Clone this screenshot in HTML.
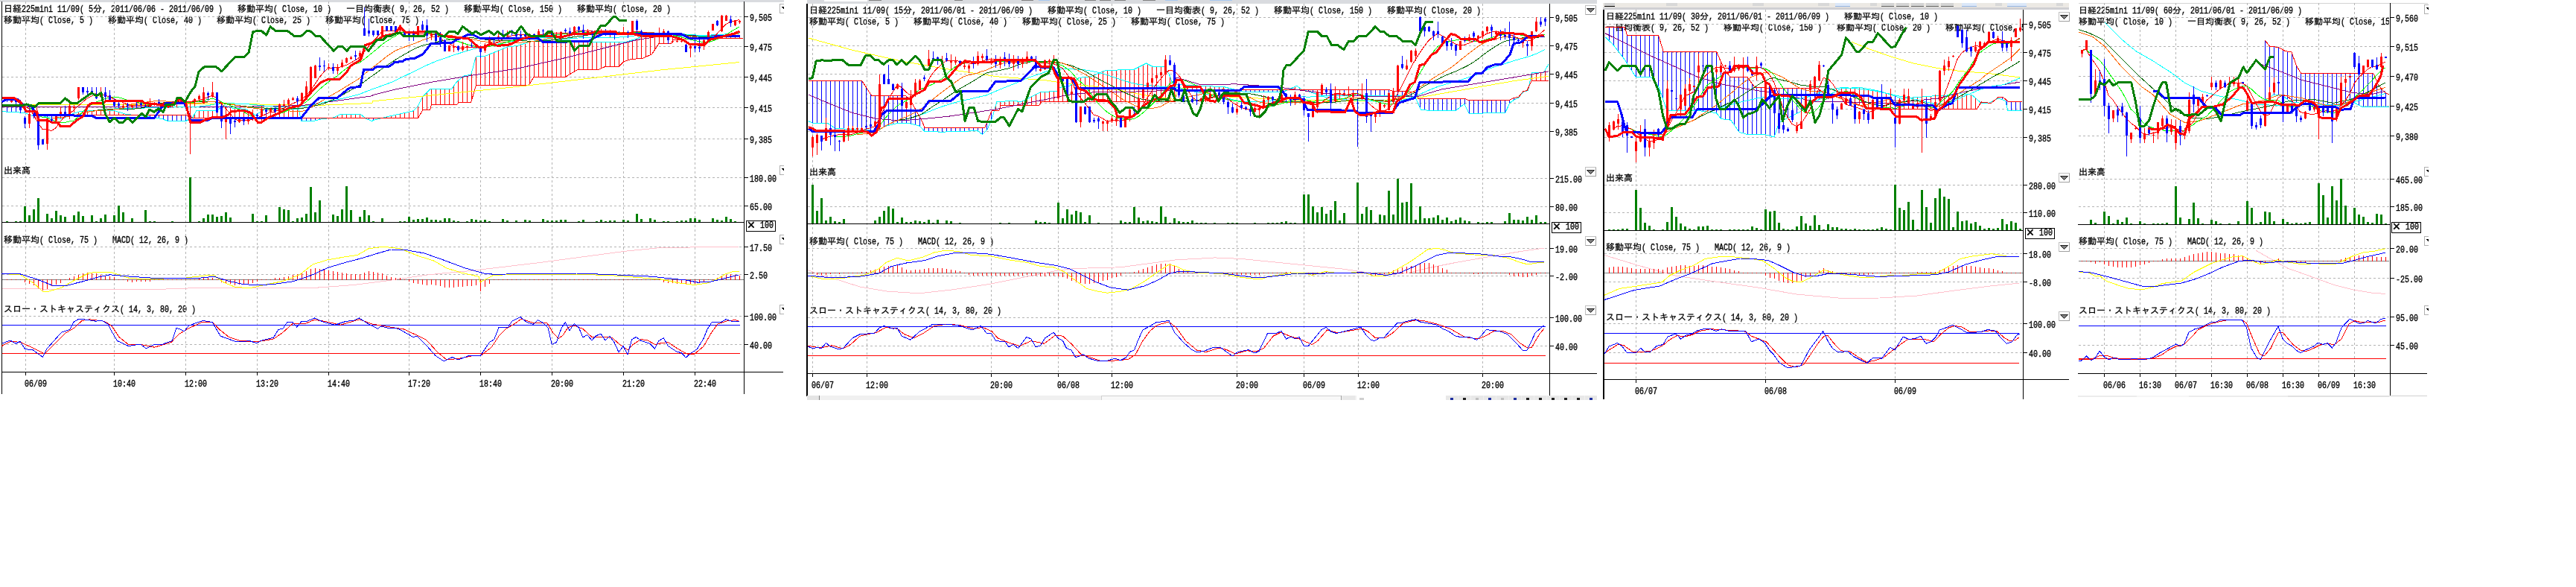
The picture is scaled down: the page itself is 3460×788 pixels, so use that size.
<!DOCTYPE html>
<html lang="ja"><head><meta charset="utf-8"><title>日経225mini charts</title><style>
html,body{margin:0;padding:0;background:#fff}
#root{position:relative;width:3460px;height:788px;overflow:hidden;background:#fff}
svg{position:absolute;left:0;top:0}
#txt{position:absolute;left:0;top:0;width:3460px;height:788px;will-change:transform}
.t{position:absolute;font:12px/12px 'Liberation Mono','IPAGothic',monospace;white-space:pre;color:#000;-webkit-text-stroke:0.3px #000}
.x{display:inline-block;width:12px;text-align:center;transform:scale(1.5)}
.a{font-size:10px;display:inline-block;transform:scaleY(1.3);transform-origin:0 78%}
</style></head><body><div id="root">
<div id="txt">
<div class="t" style="left:1007px;top:19px"><span class="a">9,505</span></div>
<div class="t" style="left:1007px;top:59px"><span class="a">9,475</span></div>
<div class="t" style="left:1007px;top:100px"><span class="a">9,445</span></div>
<div class="t" style="left:1007px;top:141px"><span class="a">9,415</span></div>
<div class="t" style="left:1007px;top:183px"><span class="a">9,385</span></div>
<div class="t" style="left:1007px;top:235px"><span class="a">180.00</span></div>
<div class="t" style="left:1007px;top:273px"><span class="a">65.00</span></div>
<div class="t" style="left:1007px;top:328px"><span class="a">17.50</span></div>
<div class="t" style="left:1007px;top:365px"><span class="a">2.50</span></div>
<div class="t" style="left:1007px;top:421px"><span class="a">100.00</span></div>
<div class="t" style="left:1007px;top:459px"><span class="a">40.00</span></div>
<div class="t" style="left:33px;top:510px"><span class="a">06/09</span></div>
<div class="t" style="left:152px;top:510px"><span class="a">10:40</span></div>
<div class="t" style="left:248px;top:510px"><span class="a">12:00</span></div>
<div class="t" style="left:344px;top:510px"><span class="a">13:20</span></div>
<div class="t" style="left:440px;top:510px"><span class="a">14:40</span></div>
<div class="t" style="left:548px;top:510px"><span class="a">17:20</span></div>
<div class="t" style="left:644px;top:510px"><span class="a">18:40</span></div>
<div class="t" style="left:740px;top:510px"><span class="a">20:00</span></div>
<div class="t" style="left:836px;top:510px"><span class="a">21:20</span></div>
<div class="t" style="left:932px;top:510px"><span class="a">22:40</span></div>
<div class="t" style="left:1003px;top:297px"><span class="x">×</span><span class="a"> 100</span></div>
<div class="t" style="left:2089px;top:20px"><span class="a">9,505</span></div>
<div class="t" style="left:2089px;top:58px"><span class="a">9,475</span></div>
<div class="t" style="left:2089px;top:96px"><span class="a">9,445</span></div>
<div class="t" style="left:2089px;top:135px"><span class="a">9,415</span></div>
<div class="t" style="left:2089px;top:173px"><span class="a">9,385</span></div>
<div class="t" style="left:2089px;top:236px"><span class="a">215.00</span></div>
<div class="t" style="left:2089px;top:274px"><span class="a">80.00</span></div>
<div class="t" style="left:2089px;top:330px"><span class="a">19.00</span></div>
<div class="t" style="left:2089px;top:367px"><span class="a">-2.00</span></div>
<div class="t" style="left:2089px;top:423px"><span class="a">100.00</span></div>
<div class="t" style="left:2089px;top:461px"><span class="a">40.00</span></div>
<div class="t" style="left:1090px;top:512px"><span class="a">06/07</span></div>
<div class="t" style="left:1163px;top:512px"><span class="a">12:00</span></div>
<div class="t" style="left:1330px;top:512px"><span class="a">20:00</span></div>
<div class="t" style="left:1420px;top:512px"><span class="a">06/08</span></div>
<div class="t" style="left:1492px;top:512px"><span class="a">12:00</span></div>
<div class="t" style="left:1660px;top:512px"><span class="a">20:00</span></div>
<div class="t" style="left:1750px;top:512px"><span class="a">06/09</span></div>
<div class="t" style="left:1823px;top:512px"><span class="a">12:00</span></div>
<div class="t" style="left:1990px;top:512px"><span class="a">20:00</span></div>
<div class="t" style="left:2085px;top:299px"><span class="x">×</span><span class="a"> 100</span></div>
<div class="t" style="left:2725px;top:29px"><span class="a">9,505</span></div>
<div class="t" style="left:2725px;top:67px"><span class="a">9,475</span></div>
<div class="t" style="left:2725px;top:105px"><span class="a">9,445</span></div>
<div class="t" style="left:2725px;top:143px"><span class="a">9,415</span></div>
<div class="t" style="left:2725px;top:181px"><span class="a">9,385</span></div>
<div class="t" style="left:2725px;top:245px"><span class="a">280.00</span></div>
<div class="t" style="left:2725px;top:282px"><span class="a">110.00</span></div>
<div class="t" style="left:2725px;top:337px"><span class="a">18.00</span></div>
<div class="t" style="left:2725px;top:375px"><span class="a">-8.00</span></div>
<div class="t" style="left:2725px;top:431px"><span class="a">100.00</span></div>
<div class="t" style="left:2725px;top:470px"><span class="a">40.00</span></div>
<div class="t" style="left:2196px;top:520px"><span class="a">06/07</span></div>
<div class="t" style="left:2370px;top:520px"><span class="a">06/08</span></div>
<div class="t" style="left:2544px;top:520px"><span class="a">06/09</span></div>
<div class="t" style="left:2721px;top:307px"><span class="x">×</span><span class="a"> 100</span></div>
<div class="t" style="left:3218px;top:20px"><span class="a">9,560</span></div>
<div class="t" style="left:3218px;top:59px"><span class="a">9,515</span></div>
<div class="t" style="left:3218px;top:99px"><span class="a">9,470</span></div>
<div class="t" style="left:3218px;top:139px"><span class="a">9,425</span></div>
<div class="t" style="left:3218px;top:179px"><span class="a">9,380</span></div>
<div class="t" style="left:3218px;top:237px"><span class="a">465.00</span></div>
<div class="t" style="left:3218px;top:274px"><span class="a">185.00</span></div>
<div class="t" style="left:3218px;top:330px"><span class="a">20.00</span></div>
<div class="t" style="left:3218px;top:370px"><span class="a">-25.00</span></div>
<div class="t" style="left:3218px;top:422px"><span class="a">95.00</span></div>
<div class="t" style="left:3218px;top:460px"><span class="a">45.00</span></div>
<div class="t" style="left:2825px;top:512px"><span class="a">06/06</span></div>
<div class="t" style="left:2873px;top:512px"><span class="a">16:30</span></div>
<div class="t" style="left:2921px;top:512px"><span class="a">06/07</span></div>
<div class="t" style="left:2969px;top:512px"><span class="a">16:30</span></div>
<div class="t" style="left:3017px;top:512px"><span class="a">06/08</span></div>
<div class="t" style="left:3065px;top:512px"><span class="a">16:30</span></div>
<div class="t" style="left:3113px;top:512px"><span class="a">06/09</span></div>
<div class="t" style="left:3161px;top:512px"><span class="a">16:30</span></div>
<div class="t" style="left:3213px;top:299px"><span class="x">×</span><span class="a"> 100</span></div>
<div class="t" style="left:5px;top:7px">日経<span class="a">225mini 11/09( 5</span>分<span class="a">, 2011/06/06 - 2011/06/09 )</span></div>
<div class="t" style="left:319px;top:7px">移動平均<span class="a">( Close, 10 )</span></div>
<div class="t" style="left:465px;top:7px">一目均衡表<span class="a">( 9, 26, 52 )</span></div>
<div class="t" style="left:623px;top:7px">移動平均<span class="a">( Close, 150 )</span></div>
<div class="t" style="left:775px;top:7px">移動平均<span class="a">( Close, 20 )</span></div>
<div class="t" style="left:5px;top:22px">移動平均<span class="a">( Close, 5 )</span></div>
<div class="t" style="left:145px;top:22px">移動平均<span class="a">( Close, 40 )</span></div>
<div class="t" style="left:291px;top:22px">移動平均<span class="a">( Close, 25 )</span></div>
<div class="t" style="left:437px;top:22px">移動平均<span class="a">( Close, 75 )</span></div>
<div class="t" style="left:5px;top:224px">出来高</div>
<div class="t" style="left:5px;top:317px">移動平均<span class="a">( Close, 75 )</span></div>
<div class="t" style="left:151px;top:317px"><span class="a">MACD( 12, 26, 9 )</span></div>
<div class="t" style="left:5px;top:410px">スロー・ストキャスティクス<span class="a">( 14, 3, 80, 20 )</span></div>
<div class="t" style="left:1087px;top:9px">日経<span class="a">225mini 11/09( 15</span>分<span class="a">, 2011/06/01 - 2011/06/09 )</span></div>
<div class="t" style="left:1407px;top:9px">移動平均<span class="a">( Close, 10 )</span></div>
<div class="t" style="left:1553px;top:9px">一目均衡表<span class="a">( 9, 26, 52 )</span></div>
<div class="t" style="left:1711px;top:9px">移動平均<span class="a">( Close, 150 )</span></div>
<div class="t" style="left:1863px;top:9px">移動平均<span class="a">( Close, 20 )</span></div>
<div class="t" style="left:1087px;top:24px">移動平均<span class="a">( Close, 5 )</span></div>
<div class="t" style="left:1227px;top:24px">移動平均<span class="a">( Close, 40 )</span></div>
<div class="t" style="left:1373px;top:24px">移動平均<span class="a">( Close, 25 )</span></div>
<div class="t" style="left:1519px;top:24px">移動平均<span class="a">( Close, 75 )</span></div>
<div class="t" style="left:1087px;top:226px">出来高</div>
<div class="t" style="left:1087px;top:319px">移動平均<span class="a">( Close, 75 )</span></div>
<div class="t" style="left:1233px;top:319px"><span class="a">MACD( 12, 26, 9 )</span></div>
<div class="t" style="left:1087px;top:412px">スロー・ストキャスティクス<span class="a">( 14, 3, 80, 20 )</span></div>
<div class="t" style="left:2157px;top:17px;width:560px;overflow:hidden">日経<span class="a">225mini 11/09( 30</span>分<span class="a">, 2011/06/01 - 2011/06/09 )</span></div>
<div class="t" style="left:2477px;top:17px;width:240px;overflow:hidden">移動平均<span class="a">( Close, 10 )</span></div>
<div class="t" style="left:2157px;top:32px;width:560px;overflow:hidden">一目均衡表<span class="a">( 9, 26, 52 )</span></div>
<div class="t" style="left:2315px;top:32px;width:402px;overflow:hidden">移動平均<span class="a">( Close, 150 )</span></div>
<div class="t" style="left:2467px;top:32px;width:250px;overflow:hidden">移動平均<span class="a">( Close, 20 )</span></div>
<div class="t" style="left:2613px;top:32px;width:104px;overflow:hidden">移動平均<span class="a">( Close, 5 )</span></div>
<div class="t" style="left:2157px;top:234px">出来高</div>
<div class="t" style="left:2157px;top:327px">移動平均<span class="a">( Close, 75 )</span></div>
<div class="t" style="left:2303px;top:327px"><span class="a">MACD( 12, 26, 9 )</span></div>
<div class="t" style="left:2157px;top:421px">スロー・ストキャスティクス<span class="a">( 14, 3, 80, 20 )</span></div>
<div class="t" style="left:2792px;top:9px;width:417px;overflow:hidden">日経<span class="a">225mini 11/09( 60</span>分<span class="a">, 2011/06/01 - 2011/06/09 )</span></div>
<div class="t" style="left:2792px;top:24px;width:417px;overflow:hidden">移動平均<span class="a">( Close, 10 )</span></div>
<div class="t" style="left:2938px;top:24px;width:271px;overflow:hidden">一目均衡表<span class="a">( 9, 26, 52 )</span></div>
<div class="t" style="left:3096px;top:24px;width:113px;overflow:hidden">移動平均<span class="a">( Close, 150 )</span></div>
<div class="t" style="left:2792px;top:226px">出来高</div>
<div class="t" style="left:2792px;top:319px">移動平均<span class="a">( Close, 75 )</span></div>
<div class="t" style="left:2938px;top:319px"><span class="a">MACD( 12, 26, 9 )</span></div>
<div class="t" style="left:2792px;top:412px">スロー・ストキャスティクス<span class="a">( 14, 3, 80, 20 )</span></div>
</div>
<svg width="3460" height="788" viewBox="0 0 3460 788" shape-rendering="crispEdges">
<path d="M0 0h1053v3h-1053zM1084 0h1061v5h-1061z" fill="#d9dbdf"/>
<path d="M1107 0h58v2h-58zM2175 4h79v5h-79zM2258 4h112v5h-112zM2374 4h84v5h-84zM2490 4h32v5h-32zM2660 4h30v5h-30zM2728 4h44v5h-44z" fill="#ffffff"/>
<path d="M1167 0h17v1h-17zM1282 0h11v1h-11zM1372 0h16v1h-16zM1457 0h15v1h-15zM1477 0h15v1h-15zM1497 0h15v1h-15zM1535 0h17v1h-17z" fill="#808080"/>
<path d="M1395 0h15v1h-15zM1565 0h17v1h-17zM1625 0h30v1h-30z" fill="#a8c8f0"/>
<path d="M2153 4h626v9h-626z" fill="#ece9e4"/>
<path d="M2153 10h626v3h-626z" fill="#cfcfd3"/>
<path d="M2238 4h15v4h-15zM2354 4h15v4h-15zM2442 4h15v4h-15zM2512 4h9v4h-9zM2680 4h9v4h-9zM2762 4h9v4h-9z" fill="#d8d8d8"/>
<path d="M2155 4h14v5h-14z" fill="#d0d0d0"/>
<path d="M2155 8.5H2169" stroke="#000" fill="none"/>
<path d="M2527 4h17v5h-17zM2547 4h17v5h-17zM2567 4h17v5h-17zM2587 4h17v5h-17zM2607 4h17v5h-17z" fill="#d4d4d4"/>
<path d="M2527 8.5H2544M2547 8.5H2564M2567 8.5H2584M2587 8.5H2604M2607 8.5H2624" stroke="#606060" fill="none"/>
<path d="M2465 4h20v5h-20zM2635 4h20v5h-20zM2696 4h26v5h-26z" fill="#dce8f8"/>
<path d="M2465 8.5H2485M2635 8.5H2655M2696 8.5H2722" stroke="#90b0e0" fill="none"/>
<path d="M2792 4.5H3261" stroke="#d4d4d4" fill="none"/>
<line x1="3" y1="22.5" x2="999" y2="22.5" stroke="#b4b4b4" stroke-width="1" stroke-dasharray="3 3"/>
<line x1="3" y1="62.5" x2="999" y2="62.5" stroke="#b4b4b4" stroke-width="1" stroke-dasharray="3 3"/>
<line x1="3" y1="103.5" x2="999" y2="103.5" stroke="#b4b4b4" stroke-width="1" stroke-dasharray="3 3"/>
<line x1="3" y1="144.5" x2="999" y2="144.5" stroke="#b4b4b4" stroke-width="1" stroke-dasharray="3 3"/>
<line x1="3" y1="186.5" x2="999" y2="186.5" stroke="#b4b4b4" stroke-width="1" stroke-dasharray="3 3"/>
<line x1="3" y1="238.5" x2="999" y2="238.5" stroke="#b4b4b4" stroke-width="1" stroke-dasharray="3 3"/>
<line x1="3" y1="276.5" x2="999" y2="276.5" stroke="#b4b4b4" stroke-width="1" stroke-dasharray="3 3"/>
<line x1="3" y1="331.5" x2="999" y2="331.5" stroke="#b4b4b4" stroke-width="1" stroke-dasharray="3 3"/>
<line x1="3" y1="368.5" x2="999" y2="368.5" stroke="#b4b4b4" stroke-width="1" stroke-dasharray="3 3"/>
<line x1="3" y1="424.5" x2="999" y2="424.5" stroke="#b4b4b4" stroke-width="1" stroke-dasharray="3 3"/>
<line x1="3" y1="462.5" x2="999" y2="462.5" stroke="#b4b4b4" stroke-width="1" stroke-dasharray="3 3"/>
<line x1="34.5" y1="2" x2="34.5" y2="499" stroke="#b4b4b4" stroke-width="1" stroke-dasharray="3 3"/>
<path d="M34.5 499V504" stroke="#000" fill="none"/>
<line x1="153.5" y1="2" x2="153.5" y2="499" stroke="#b4b4b4" stroke-width="1" stroke-dasharray="3 3"/>
<path d="M153.5 499V504" stroke="#000" fill="none"/>
<line x1="249.5" y1="2" x2="249.5" y2="499" stroke="#b4b4b4" stroke-width="1" stroke-dasharray="3 3"/>
<path d="M249.5 499V504" stroke="#000" fill="none"/>
<line x1="345.5" y1="2" x2="345.5" y2="499" stroke="#b4b4b4" stroke-width="1" stroke-dasharray="3 3"/>
<path d="M345.5 499V504" stroke="#000" fill="none"/>
<line x1="441.5" y1="2" x2="441.5" y2="499" stroke="#b4b4b4" stroke-width="1" stroke-dasharray="3 3"/>
<path d="M441.5 499V504" stroke="#000" fill="none"/>
<line x1="549.5" y1="2" x2="549.5" y2="499" stroke="#b4b4b4" stroke-width="1" stroke-dasharray="3 3"/>
<path d="M549.5 499V504" stroke="#000" fill="none"/>
<line x1="645.5" y1="2" x2="645.5" y2="499" stroke="#b4b4b4" stroke-width="1" stroke-dasharray="3 3"/>
<path d="M645.5 499V504" stroke="#000" fill="none"/>
<line x1="741.5" y1="2" x2="741.5" y2="499" stroke="#b4b4b4" stroke-width="1" stroke-dasharray="3 3"/>
<path d="M741.5 499V504" stroke="#000" fill="none"/>
<line x1="837.5" y1="2" x2="837.5" y2="499" stroke="#b4b4b4" stroke-width="1" stroke-dasharray="3 3"/>
<path d="M837.5 499V504" stroke="#000" fill="none"/>
<line x1="933.5" y1="2" x2="933.5" y2="499" stroke="#b4b4b4" stroke-width="1" stroke-dasharray="3 3"/>
<path d="M933.5 499V504M999 22.5H1005M999 62.5H1005M999 103.5H1005M999 144.5H1005M999 186.5H1005M999 238.5H1005M999 276.5H1005M999 331.5H1005M999 368.5H1005M999 424.5H1005M999 462.5H1005M2.5 2V529M999.5 2V529M2 499.5H1052M2 298.5H999" stroke="#000" fill="none"/>
<rect x="1002.5" y="296.5" width="39" height="14" fill="none" stroke="#000" stroke-width="1"/>
<line x1="1085" y1="23.5" x2="2081" y2="23.5" stroke="#b4b4b4" stroke-width="1" stroke-dasharray="3 3"/>
<line x1="1085" y1="61.5" x2="2081" y2="61.5" stroke="#b4b4b4" stroke-width="1" stroke-dasharray="3 3"/>
<line x1="1085" y1="99.5" x2="2081" y2="99.5" stroke="#b4b4b4" stroke-width="1" stroke-dasharray="3 3"/>
<line x1="1085" y1="138.5" x2="2081" y2="138.5" stroke="#b4b4b4" stroke-width="1" stroke-dasharray="3 3"/>
<line x1="1085" y1="176.5" x2="2081" y2="176.5" stroke="#b4b4b4" stroke-width="1" stroke-dasharray="3 3"/>
<line x1="1085" y1="239.5" x2="2081" y2="239.5" stroke="#b4b4b4" stroke-width="1" stroke-dasharray="3 3"/>
<line x1="1085" y1="277.5" x2="2081" y2="277.5" stroke="#b4b4b4" stroke-width="1" stroke-dasharray="3 3"/>
<line x1="1085" y1="333.5" x2="2081" y2="333.5" stroke="#b4b4b4" stroke-width="1" stroke-dasharray="3 3"/>
<line x1="1085" y1="370.5" x2="2081" y2="370.5" stroke="#b4b4b4" stroke-width="1" stroke-dasharray="3 3"/>
<line x1="1085" y1="426.5" x2="2081" y2="426.5" stroke="#b4b4b4" stroke-width="1" stroke-dasharray="3 3"/>
<line x1="1085" y1="464.5" x2="2081" y2="464.5" stroke="#b4b4b4" stroke-width="1" stroke-dasharray="3 3"/>
<line x1="1091.5" y1="5" x2="1091.5" y2="501" stroke="#b4b4b4" stroke-width="1" stroke-dasharray="3 3"/>
<path d="M1091.5 501V506" stroke="#000" fill="none"/>
<line x1="1164.5" y1="5" x2="1164.5" y2="501" stroke="#b4b4b4" stroke-width="1" stroke-dasharray="3 3"/>
<path d="M1164.5 501V506" stroke="#000" fill="none"/>
<line x1="1331.5" y1="5" x2="1331.5" y2="501" stroke="#b4b4b4" stroke-width="1" stroke-dasharray="3 3"/>
<path d="M1331.5 501V506" stroke="#000" fill="none"/>
<line x1="1421.5" y1="5" x2="1421.5" y2="501" stroke="#b4b4b4" stroke-width="1" stroke-dasharray="3 3"/>
<path d="M1421.5 501V506" stroke="#000" fill="none"/>
<line x1="1493.5" y1="5" x2="1493.5" y2="501" stroke="#b4b4b4" stroke-width="1" stroke-dasharray="3 3"/>
<path d="M1493.5 501V506" stroke="#000" fill="none"/>
<line x1="1661.5" y1="5" x2="1661.5" y2="501" stroke="#b4b4b4" stroke-width="1" stroke-dasharray="3 3"/>
<path d="M1661.5 501V506" stroke="#000" fill="none"/>
<line x1="1751.5" y1="5" x2="1751.5" y2="501" stroke="#b4b4b4" stroke-width="1" stroke-dasharray="3 3"/>
<path d="M1751.5 501V506" stroke="#000" fill="none"/>
<line x1="1824.5" y1="5" x2="1824.5" y2="501" stroke="#b4b4b4" stroke-width="1" stroke-dasharray="3 3"/>
<path d="M1824.5 501V506" stroke="#000" fill="none"/>
<line x1="1991.5" y1="5" x2="1991.5" y2="501" stroke="#b4b4b4" stroke-width="1" stroke-dasharray="3 3"/>
<path d="M1991.5 501V506M2081 23.5H2087M2081 61.5H2087M2081 99.5H2087M2081 138.5H2087M2081 176.5H2087M2081 239.5H2087M2081 277.5H2087M2081 333.5H2087M2081 370.5H2087M2081 426.5H2087M2081 464.5H2087M2081.5 5V532M1084 501.5H2145M1084 300.5H2081" stroke="#000" fill="none"/>
<path d="M1083 5h2v527h-2z" fill="#000"/>
<rect x="2084.5" y="298.5" width="39" height="14" fill="none" stroke="#000" stroke-width="1"/>
<line x1="2155" y1="32.5" x2="2717" y2="32.5" stroke="#b4b4b4" stroke-width="1" stroke-dasharray="3 3"/>
<line x1="2155" y1="70.5" x2="2717" y2="70.5" stroke="#b4b4b4" stroke-width="1" stroke-dasharray="3 3"/>
<line x1="2155" y1="108.5" x2="2717" y2="108.5" stroke="#b4b4b4" stroke-width="1" stroke-dasharray="3 3"/>
<line x1="2155" y1="146.5" x2="2717" y2="146.5" stroke="#b4b4b4" stroke-width="1" stroke-dasharray="3 3"/>
<line x1="2155" y1="184.5" x2="2717" y2="184.5" stroke="#b4b4b4" stroke-width="1" stroke-dasharray="3 3"/>
<line x1="2155" y1="248.5" x2="2717" y2="248.5" stroke="#b4b4b4" stroke-width="1" stroke-dasharray="3 3"/>
<line x1="2155" y1="285.5" x2="2717" y2="285.5" stroke="#b4b4b4" stroke-width="1" stroke-dasharray="3 3"/>
<line x1="2155" y1="340.5" x2="2717" y2="340.5" stroke="#b4b4b4" stroke-width="1" stroke-dasharray="3 3"/>
<line x1="2155" y1="378.5" x2="2717" y2="378.5" stroke="#b4b4b4" stroke-width="1" stroke-dasharray="3 3"/>
<line x1="2155" y1="434.5" x2="2717" y2="434.5" stroke="#b4b4b4" stroke-width="1" stroke-dasharray="3 3"/>
<line x1="2155" y1="473.5" x2="2717" y2="473.5" stroke="#b4b4b4" stroke-width="1" stroke-dasharray="3 3"/>
<line x1="2197.5" y1="13" x2="2197.5" y2="509" stroke="#b4b4b4" stroke-width="1" stroke-dasharray="3 3"/>
<path d="M2197.5 509V514" stroke="#000" fill="none"/>
<line x1="2371.5" y1="13" x2="2371.5" y2="509" stroke="#b4b4b4" stroke-width="1" stroke-dasharray="3 3"/>
<path d="M2371.5 509V514" stroke="#000" fill="none"/>
<line x1="2545.5" y1="13" x2="2545.5" y2="509" stroke="#b4b4b4" stroke-width="1" stroke-dasharray="3 3"/>
<path d="M2545.5 509V514M2717 32.5H2723M2717 70.5H2723M2717 108.5H2723M2717 146.5H2723M2717 184.5H2723M2717 248.5H2723M2717 285.5H2723M2717 340.5H2723M2717 378.5H2723M2717 434.5H2723M2717 473.5H2723M2717.5 13V536M2154 509.5H2779M2154 309.5H2717" stroke="#000" fill="none"/>
<path d="M2153 13h2v523h-2z" fill="#000"/>
<rect x="2720.5" y="306.5" width="39" height="14" fill="none" stroke="#000" stroke-width="1"/>
<line x1="2792" y1="23.5" x2="3210" y2="23.5" stroke="#b4b4b4" stroke-width="1" stroke-dasharray="3 3"/>
<line x1="2792" y1="62.5" x2="3210" y2="62.5" stroke="#b4b4b4" stroke-width="1" stroke-dasharray="3 3"/>
<line x1="2792" y1="102.5" x2="3210" y2="102.5" stroke="#b4b4b4" stroke-width="1" stroke-dasharray="3 3"/>
<line x1="2792" y1="142.5" x2="3210" y2="142.5" stroke="#b4b4b4" stroke-width="1" stroke-dasharray="3 3"/>
<line x1="2792" y1="182.5" x2="3210" y2="182.5" stroke="#b4b4b4" stroke-width="1" stroke-dasharray="3 3"/>
<line x1="2792" y1="240.5" x2="3210" y2="240.5" stroke="#b4b4b4" stroke-width="1" stroke-dasharray="3 3"/>
<line x1="2792" y1="277.5" x2="3210" y2="277.5" stroke="#b4b4b4" stroke-width="1" stroke-dasharray="3 3"/>
<line x1="2792" y1="333.5" x2="3210" y2="333.5" stroke="#b4b4b4" stroke-width="1" stroke-dasharray="3 3"/>
<line x1="2792" y1="373.5" x2="3210" y2="373.5" stroke="#b4b4b4" stroke-width="1" stroke-dasharray="3 3"/>
<line x1="2792" y1="425.5" x2="3210" y2="425.5" stroke="#b4b4b4" stroke-width="1" stroke-dasharray="3 3"/>
<line x1="2792" y1="463.5" x2="3210" y2="463.5" stroke="#b4b4b4" stroke-width="1" stroke-dasharray="3 3"/>
<line x1="2826.5" y1="4" x2="2826.5" y2="501" stroke="#b4b4b4" stroke-width="1" stroke-dasharray="3 3"/>
<path d="M2826.5 501V506" stroke="#000" fill="none"/>
<line x1="2874.5" y1="4" x2="2874.5" y2="501" stroke="#b4b4b4" stroke-width="1" stroke-dasharray="3 3"/>
<path d="M2874.5 501V506" stroke="#000" fill="none"/>
<line x1="2922.5" y1="4" x2="2922.5" y2="501" stroke="#b4b4b4" stroke-width="1" stroke-dasharray="3 3"/>
<path d="M2922.5 501V506" stroke="#000" fill="none"/>
<line x1="2970.5" y1="4" x2="2970.5" y2="501" stroke="#b4b4b4" stroke-width="1" stroke-dasharray="3 3"/>
<path d="M2970.5 501V506" stroke="#000" fill="none"/>
<line x1="3018.5" y1="4" x2="3018.5" y2="501" stroke="#b4b4b4" stroke-width="1" stroke-dasharray="3 3"/>
<path d="M3018.5 501V506" stroke="#000" fill="none"/>
<line x1="3066.5" y1="4" x2="3066.5" y2="501" stroke="#b4b4b4" stroke-width="1" stroke-dasharray="3 3"/>
<path d="M3066.5 501V506" stroke="#000" fill="none"/>
<line x1="3114.5" y1="4" x2="3114.5" y2="501" stroke="#b4b4b4" stroke-width="1" stroke-dasharray="3 3"/>
<path d="M3114.5 501V506" stroke="#000" fill="none"/>
<line x1="3162.5" y1="4" x2="3162.5" y2="501" stroke="#b4b4b4" stroke-width="1" stroke-dasharray="3 3"/>
<path d="M3162.5 501V506M3210 23.5H3216M3210 62.5H3216M3210 102.5H3216M3210 142.5H3216M3210 182.5H3216M3210 240.5H3216M3210 277.5H3216M3210 333.5H3216M3210 373.5H3216M3210 425.5H3216M3210 463.5H3216M3210.5 4V531M2791 501.5H3260M2791 301.5H3210" stroke="#000" fill="none"/>
<rect x="3212.5" y="298.5" width="39" height="14" fill="none" stroke="#000" stroke-width="1"/>
<path d="M1047 5h6v13h-6z" fill="#ffffff"/>
<path d="M1053 5.5 h-5.5 v12 h5.5" fill="none" stroke="#b0b0b0" stroke-width="1"/>
<path d="M1049 9 h4 v4z" fill="#000"/>
<path d="M1047 222h6v13h-6z" fill="#ffffff"/>
<path d="M1053 222.5 h-5.5 v12 h5.5" fill="none" stroke="#b0b0b0" stroke-width="1"/>
<path d="M1049 226 h4 v4z" fill="#000"/>
<path d="M1047 315h6v13h-6z" fill="#ffffff"/>
<path d="M1053 315.5 h-5.5 v12 h5.5" fill="none" stroke="#b0b0b0" stroke-width="1"/>
<path d="M1049 319 h4 v4z" fill="#000"/>
<path d="M1047 409h6v13h-6z" fill="#ffffff"/>
<path d="M1053 409.5 h-5.5 v12 h5.5" fill="none" stroke="#b0b0b0" stroke-width="1"/>
<path d="M1049 413 h4 v4z" fill="#000"/>
<rect x="2129.5" y="7.5" width="14" height="12" fill="#fff" stroke="#c0c0c0" stroke-width="1"/>
<path d="M2143.5 8 v11.5 h-13.5" fill="none" stroke="#a0a0a0" stroke-width="1"/>
<path d="M2131.5 11.5 h10 l-5 5z" fill="#808080" stroke="#202020" stroke-width="1" shape-rendering="auto"/>
<rect x="2129.5" y="224.5" width="14" height="12" fill="#fff" stroke="#c0c0c0" stroke-width="1"/>
<path d="M2143.5 225 v11.5 h-13.5" fill="none" stroke="#a0a0a0" stroke-width="1"/>
<path d="M2131.5 228.5 h10 l-5 5z" fill="#808080" stroke="#202020" stroke-width="1" shape-rendering="auto"/>
<rect x="2129.5" y="317.5" width="14" height="12" fill="#fff" stroke="#c0c0c0" stroke-width="1"/>
<path d="M2143.5 318 v11.5 h-13.5" fill="none" stroke="#a0a0a0" stroke-width="1"/>
<path d="M2131.5 321.5 h10 l-5 5z" fill="#808080" stroke="#202020" stroke-width="1" shape-rendering="auto"/>
<rect x="2129.5" y="410.5" width="14" height="12" fill="#fff" stroke="#c0c0c0" stroke-width="1"/>
<path d="M2143.5 411 v11.5 h-13.5" fill="none" stroke="#a0a0a0" stroke-width="1"/>
<path d="M2131.5 414.5 h10 l-5 5z" fill="#808080" stroke="#202020" stroke-width="1" shape-rendering="auto"/>
<rect x="2765.5" y="16.5" width="14" height="12" fill="#fff" stroke="#c0c0c0" stroke-width="1"/>
<path d="M2779.5 17 v11.5 h-13.5" fill="none" stroke="#a0a0a0" stroke-width="1"/>
<path d="M2767.5 20.5 h10 l-5 5z" fill="#808080" stroke="#202020" stroke-width="1" shape-rendering="auto"/>
<rect x="2765.5" y="232.5" width="14" height="12" fill="#fff" stroke="#c0c0c0" stroke-width="1"/>
<path d="M2779.5 233 v11.5 h-13.5" fill="none" stroke="#a0a0a0" stroke-width="1"/>
<path d="M2767.5 236.5 h10 l-5 5z" fill="#808080" stroke="#202020" stroke-width="1" shape-rendering="auto"/>
<rect x="2765.5" y="325.5" width="14" height="12" fill="#fff" stroke="#c0c0c0" stroke-width="1"/>
<path d="M2779.5 326 v11.5 h-13.5" fill="none" stroke="#a0a0a0" stroke-width="1"/>
<path d="M2767.5 329.5 h10 l-5 5z" fill="#808080" stroke="#202020" stroke-width="1" shape-rendering="auto"/>
<rect x="2765.5" y="418.5" width="14" height="12" fill="#fff" stroke="#c0c0c0" stroke-width="1"/>
<path d="M2779.5 419 v11.5 h-13.5" fill="none" stroke="#a0a0a0" stroke-width="1"/>
<path d="M2767.5 422.5 h10 l-5 5z" fill="#808080" stroke="#202020" stroke-width="1" shape-rendering="auto"/>
<path d="M3256 6h6v13h-6z" fill="#ffffff"/>
<path d="M3262 6.5 h-5.5 v12 h5.5" fill="none" stroke="#b0b0b0" stroke-width="1"/>
<path d="M3258 10 h4 v4z" fill="#000"/>
<path d="M3256 224h6v13h-6z" fill="#ffffff"/>
<path d="M3262 224.5 h-5.5 v12 h5.5" fill="none" stroke="#b0b0b0" stroke-width="1"/>
<path d="M3258 228 h4 v4z" fill="#000"/>
<path d="M3256 317h6v13h-6z" fill="#ffffff"/>
<path d="M3262 317.5 h-5.5 v12 h5.5" fill="none" stroke="#b0b0b0" stroke-width="1"/>
<path d="M3258 321 h4 v4z" fill="#000"/>
<path d="M3256 410h6v13h-6z" fill="#ffffff"/>
<path d="M3262 410.5 h-5.5 v12 h5.5" fill="none" stroke="#b0b0b0" stroke-width="1"/>
<path d="M3258 414 h4 v4z" fill="#000"/>
<path d="M1084 531h1061v6h-1061z" fill="#f0f0f0"/>
<path d="M1084 531h17v6h-17z" fill="#e4e4e4"/>
<path d="M1100.5 531V537M1803.5 531V537M1819.5 531V537M1942 531.5H1958M1942.5 531V537M1959 531.5H1975M1959.5 531V537M1976 531.5H1992M1976.5 531V537M1993 531.5H2009M1993.5 531V537M2010 531.5H2026M2010.5 531V537M2027 531.5H2043M2027.5 531V537M2044 531.5H2060M2044.5 531V537M2061 531.5H2077M2061.5 531V537M2078 531.5H2094M2078.5 531V537M2095 531.5H2111M2095.5 531V537M2112 531.5H2128M2112.5 531V537M2129 531.5H2145M2129.5 531V537" stroke="#808080" fill="none"/>
<path d="M1479 531h323v6h-323z" fill="#f8f8f8"/>
<path d="M1479 531.5H1802M1479.5 531V537" stroke="#d0d0d0" fill="none"/>
<path d="M1801.5 531V537M1835 535.5H1935" stroke="#a0a0a0" fill="none"/>
<path d="M1803 531h17v6h-17zM1942 531h16v6h-16zM1959 531h16v6h-16zM1976 531h16v6h-16zM1993 531h16v6h-16zM2010 531h16v6h-16zM2027 531h16v6h-16zM2044 531h16v6h-16zM2061 531h16v6h-16zM2078 531h16v6h-16zM2095 531h16v6h-16zM2112 531h16v6h-16zM2129 531h16v6h-16z" fill="#e8e8e8"/>
<path d="M1822 531h120v6h-120z" fill="#ffffff"/>
<path d="M1826 534h6v3h-6zM3209 531h51v1h-51z" fill="#d0d0d0"/>
<path d="M1948 534h4v3h-4zM1999 534h4v3h-4zM2033 534h4v3h-4zM2135 534h4v3h-4z" fill="#2030a0"/>
<path d="M1965 534h4v3h-4zM2050 534h4v3h-4zM2067 534h4v3h-4zM2084 534h4v3h-4zM2101 534h4v3h-4zM2118 534h4v3h-4z" fill="#202020"/>
<path d="M1982 534h4v3h-4zM2016 534h4v3h-4z" fill="#c0c0c0"/>
<path d="M2791 531h420v2h-420z" fill="#ececec"/>
<path d="M2870 531h70v2h-70z" fill="#f6f6f6"/>
<path d="M3073 531h136v2h-136z" fill="#e0e0e0"/>
<path d="M9.5 141.7V150.1M15.5 141.7V150.4M21.5 141.7V150.7M27.5 141.7V151.1M33.5 141.7V151.6M39.5 141.7V153.8M45.5 141.7V156.1M51.5 151.5V155.3M63.5 154.6V157.3M69.5 154.6V158.2M75.5 154.6V158.7M81.5 154.6V159.2M87.5 154.6V158M195.5 154.6V156.3M201.5 154.6V157.1M207.5 154.6V157.8M213.5 154.6V158.8M219.5 154.6V160.2M225.5 154.6V162.2M231.5 154.6V162.7M237.5 154.6V162.7M243.5 154.6V162.7M249.5 154.6V162.7M255.5 156.1V159.8M405.5 158.5V162.7M411.5 158.5V162.7M417.5 158.5V162.7M423.5 158.5V162.1M429.5 158.5V160.6M495.5 158.5V160.7M501.5 158.6V161.6" stroke="#0000ff" fill="none"/>
<path d="M99.5 152.3V154.6M105.5 150.3V154.6M111.5 149.4V154.6M117.5 149V154.6M123.5 148.6V154.6M129.5 148.2V154.6M135.5 148.1V154.6M141.5 148.1V154.6M147.5 148.1V154.6M153.5 148.4V154.6M159.5 150.2V154.6M165.5 152V154.6M261.5 153.6V158.5M267.5 148.1V158.5M273.5 148.1V158.5M279.5 148.1V158.5M285.5 148.1V158.5M291.5 148.1V158.5M297.5 144.3V158.5M303.5 142.3V158.5M309.5 144.3V158.5M315.5 145.2V158.5M321.5 145.7V158.5M327.5 146.2V158.5M333.5 148.3V158.5M339.5 152.1V158.5M345.5 153.4V158.5M351.5 149.6V158.5M357.5 146.5V158.5M363.5 146.5V158.5M369.5 146.5V158.5M375.5 146.5V158.5M381.5 146.5V158.5M387.5 146.5V158.5M393.5 146.5V158.5M399.5 146.5V158.5M453.5 155.4V158.5M459.5 153V158.5M465.5 153V158.5M471.5 153V158.5M477.5 153V158.5M483.5 153V158.5M519.5 157V158.6M525.5 155.6V158.6M531.5 154.3V158.6M537.5 152.9V158.6M543.5 151.6V158.6M549.5 150.2V158.6M555.5 148.9V158.6M561.5 142.9V158.6M567.5 131.4V148.9M573.5 124.4V147.2M579.5 119.7V141.9M585.5 119.6V140.8M591.5 119.4V140.8M597.5 119.3V140.8M603.5 119.2V140.8M609.5 116V140.8M615.5 108.6V139M621.5 103.6V137.5M627.5 101.3V137.5M633.5 99.1V136.4M639.5 76.6V115.4M645.5 75.6V114.8M651.5 75.2V114.8M657.5 73.1V114.7M663.5 70.6V114.7M669.5 68.1V114.6M675.5 65.7V114.6M681.5 63.2V114.5M687.5 62.4V114.5M693.5 61.6V114.4M699.5 60V114.3M705.5 58.2V114.3M711.5 56.6V113.2M717.5 55V103.6M723.5 53.5V103.6M729.5 53.4V103.6M735.5 53.4V103.6M741.5 53.4V103.6M747.5 53.4V103.6M753.5 53.4V103.6M759.5 53.4V103.5M765.5 53.9V99.9M771.5 54.4V96.3M777.5 54.9V93.8M783.5 55.4V93.7M789.5 55.9V93.5M795.5 56.4V93.4M801.5 56.6V93.3M807.5 56.6V92M813.5 56.6V89.4M819.5 56.6V89M825.5 56.6V89M831.5 56.6V89M837.5 56.6V83.7M843.5 55.7V80.9M849.5 53.9V79.2M855.5 52.1V79M861.5 49.3V78.7M867.5 48.5V76.6M873.5 48.5V73.9M879.5 48.5V67.4M885.5 48.5V58.4M891.5 48.5V58.3M897.5 48.5V58.3M903.5 48.5V55.7M909.5 48.5V53.4M915.5 48.5V53.4M921.5 48.5V52.8M927.5 48.5V51.8M933.5 48.5V51.8M939.5 48.5V51.8M945.5 48.5V51.8M951.5 48.5V51.8M957.5 48.5V51.8M963.5 48.5V51.8M969.5 48.5V51.8M975.5 48.5V51.8M981.5 48.5V51.8M987.5 48.5V51.8M993.5 48.5V51.8" stroke="#ff0000" fill="none"/>
<polyline points="2.6,149.7 32.4,151.4 45.3,156.2 55,154.6 64.7,157.8 84.1,159.4 97.1,153 106.8,149.7 129.4,148.1 152.1,148.1 168.3,153 207.1,157.8 216.8,159.4 226.5,162.7 249.2,162.7 258.9,157.8 263.8,148.1 291.3,148.1 301,141.7 310.7,144.9 330.1,146.5 343,154.6 356,146.5 401.3,146.5 404.5,162.7 420.7,162.7 433.7,159.4 446.6,158.5 457.9,153 483.8,153 491.9,159.4 500,162.7 500,161.8 516.2,157.6 555,148.9 561.5,142.4 568,129.4 577.7,119.7 606.8,119.1 613.3,110 623,101.9 632.7,100.3 639.2,76.1 652.1,75.1 681.2,63.1 694.2,61.5 707.1,57.6 723.3,53.4 758.9,53.4 797.7,56.6 839.8,56.6 856,51.8 862.5,48.5 993.5,48.5" fill="none" stroke="#00ffff" stroke-width="1" stroke-linejoin="round"/>
<polyline points="2.6,141.7 48.5,141.7 51.8,154.6 252.4,154.6 258.9,158.5 500,158.5 500,158.6 561.5,158.6 568,147.2 577.7,147.2 579.3,140.8 613.3,140.8 616.5,137.5 632.7,137.5 639.2,114.9 710.4,114.2 716.8,103.6 758.9,103.6 775.1,93.9 804.2,93.2 813.9,89 831.7,89 838.2,82.5 847.9,79.3 862.5,78.6 875.4,72.8 885.1,58.3 901.3,58.3 904.5,53.4 917.5,53.4 927.2,51.8 998.4,51.8" fill="none" stroke="#ff0000" stroke-width="1" stroke-linejoin="round"/>
<polyline points="2.6,140 226.5,140 323.6,139.4 420.7,141.7 500,138.4 500,135.9 597.1,126.2 694.2,116.5 791.3,105.2 888.3,93.9 993.5,83.5" fill="none" stroke="#ffff00" stroke-width="1" stroke-linejoin="round"/>
<polyline points="2.6,143.3 97.1,143.3 226.5,143.3 323.6,143.3 404.5,141.7 453.1,135.2 500,128.7 500,127.8 532.4,119.7 580.9,110 629.4,101.9 694.2,92.2 758.9,77.7 823.6,61.5 856,53.4 888.3,48.5 920.7,47.6 993.5,47.6" fill="none" stroke="#800080" stroke-width="1" stroke-linejoin="round"/>
<polyline points="99,155.3 105,153.5 111,151.8 117,150.5 123,149.3 129,148.3 135,147.5 141,146.7 147,146.2 153,146 159,145.8 165,145.7 171,145.5 177,145.4 183,145.2 189,145.1 195,145 201,144.8 207,144.7 213,144.5 219,144.3 225,144.1 231,144 237,143.7 243,143.5 249,143.6 255,143.7 261,143.6 267,143.1 273,142.3 279,141.7 285,140.5 291,139.4 297,138.8 303,138.7 309,138.8 315,139 321,139.2 327,139.5 333,139.9 339,140.2 345,141 351,141.6 357,142.2 363,142.7 369,143.2 375,143.4 381,143.7 387,143.7 393,143.5 399,143.4 405,142.9 411,142.3 417,141.2 423,140 429,138.7 435,137.3 441,136.1 447,135 453,133.8 459,132.4 465,130.9 471,129.4 477,128 483,126.4 489,124 495,121.7 501,119.4 507,117.3 513,115.1 519,112.9 525,110.8 531,108 537,105 543,102.2 549,99.3 555,96.4 561,93.5 567,90.5 573,87.7 579,85.1 585,82.5 591,80.3 597,78.3 603,76.2 609,74 615,72.2 621,70.2 627,68.4 633,66.7 639,64.9 645,63.4 651,62 657,61 663,60 669,59 675,58 681,56.8 687,55.6 693,54.5 699,53.6 705,52.9 711,52.2 717,51.5 723,50.8 729,50.7 735,50.7 741,50.8 747,50.9 753,51.1 759,51.1 765,51.2 771,51.1 777,51 783,50.9 789,50.8 795,50.7 801,50.8 807,50.8 813,50.7 819,50.6 825,50.4 831,50.1 837,49.4 843,49 849,48.3 855,47.7 861,47.3 867,47 873,46.6 879,46.3 885,45.7 891,45.2 897,45.2 903,45.3 909,45.4 915,45.6 921,46.1 927,46.6 933,46.9 939,47.2 945,47.4 951,47.2 957,46.9 963,46.7 969,46.3 975,45.9 981,45.3 987,44.8 993,44.4" fill="none" stroke="#00ffff" stroke-width="1" stroke-linejoin="round"/>
<polyline points="81,157.5 87,157.1 93,156.1 99,155.3 105,153.5 111,151.8 117,150.5 123,149.3 129,148.3 135,147.5 141,146.7 147,146.2 153,146 159,146.2 165,146.6 171,146.8 177,146.5 183,145.8 189,145.3 195,144.1 201,142 207,139.9 213,139 219,138.1 225,137.4 231,137 237,136.2 243,136 249,135.8 255,136.3 261,136.7 267,136.8 273,136.7 279,136.7 285,136.4 291,137.4 297,138.5 303,139.2 309,140.1 315,141 321,141.7 327,142.6 333,143.3 339,143.8 345,144.4 351,144.7 357,145.2 363,145.5 369,145.9 375,146 381,146.1 387,146.1 393,146 399,145.9 405,145.4 411,144.7 417,143.4 423,142.1 429,140.5 435,139 441,136.6 447,133.9 453,131.1 459,128 465,124.5 471,121.2 477,117.7 483,114.2 489,109.9 495,105.3 501,101.1 507,96.9 513,92.5 519,88.2 525,84.2 531,80.3 537,76.6 543,73.2 549,69.7 555,66.6 561,63.6 567,61.4 573,59.7 579,58.1 585,56.7 591,55.5 597,54.3 603,53.3 609,52.4 615,52 621,51.4 627,50.9 633,50.5 639,51.2 645,52.2 651,53 657,53.3 663,53.9 669,54.3 675,54.6 681,54.7 687,54.8 693,54.8 699,54.9 705,54.9 711,55.1 717,55.4 723,55.1 729,54.9 735,54.4 741,53.9 747,53.2 753,52.3 759,51.5 765,50.6 771,49.6 777,48.7 783,48 789,47.1 795,46.3 801,45.6 807,45.2 813,44.9 819,44.6 825,44.6 831,44.6 837,44.6 843,44.4 849,43.9 855,43.7 861,43.6 867,43.6 873,43.9 879,44.1 885,44.2 891,44 897,44.2 903,44.7 909,45.2 915,45.6 921,46.8 927,47.7 933,48.4 939,49.2 945,49.5 951,49.4 957,49.2 963,48.7 969,48.1 975,47.1 981,46.3 987,45.7 993,45.1" fill="none" stroke="#006400" stroke-width="1" stroke-linejoin="round"/>
<polyline points="69,158.4 75,158.1 81,157.5 87,157.1 93,156.1 99,155.3 105,153.5 111,151.8 117,150.5 123,149.3 129,148.9 135,148.9 141,148.4 147,147.7 153,146.9 159,146.3 165,144.7 171,142.2 177,139.8 183,138.8 189,137.8 195,137.2 201,136.6 207,135.9 213,135.7 219,135.5 225,136.2 231,137 237,137.2 243,137.7 249,138.3 255,138.5 261,138.8 267,138.5 273,137.7 279,137 285,136.2 291,136.7 297,137.8 303,138.7 309,139.8 315,140.9 321,141.8 327,143.1 333,144.1 339,144.9 345,145.8 351,146.2 357,147.1 363,147.6 369,148.2 375,148.3 381,148.7 387,148.9 393,149.3 399,149.7 405,149.7 411,148 417,144.6 423,141.2 429,137.5 435,133.8 441,130.3 447,126.9 453,123.5 459,120 465,116 471,112.5 477,108.8 483,105.1 489,99.9 495,95 501,90 507,85.7 513,80.9 519,76.1 525,71.9 531,68.1 537,65.4 543,63.2 549,61.2 555,59.1 561,56.7 567,54.1 573,51.9 579,50.2 585,49 591,48.2 597,47.7 603,47.3 609,48.1 615,49.4 621,50.4 627,51.2 633,52.5 639,53.6 645,55 651,55.9 657,56.5 663,56.8 669,56.8 675,56.9 681,57 687,57.1 693,57.1 699,57.1 705,56.8 711,56.3 717,55.3 723,54.3 729,53.3 735,52 741,51.2 747,50.6 753,49.6 759,48.5 765,47.4 771,46.2 777,45.5 783,45.1 789,44.7 795,44.6 801,44.6 807,44.5 813,44.4 819,44.1 825,44 831,43.9 837,43.6 843,43.7 849,43.4 855,43.4 861,43.4 867,43.4 873,43.7 879,44 885,44 891,44.3 897,45 903,45.5 909,46.1 915,46.6 921,47.7 927,48.7 933,49.5 939,50.4 945,50.7 951,50.6 957,50.2 963,49.7 969,49.3 975,48.3 981,47.3 987,46.2 993,45.2" fill="none" stroke="#ff6600" stroke-width="1" stroke-linejoin="round"/>
<polyline points="39,144.1 45,148.4 51,153.8 57,157.8 63,158 69,160.8 75,162.8 81,164.1 87,164.6 93,163.1 99,162 105,157 111,150.2 117,143.9 123,140.6 129,137.1 135,134.9 141,132.6 147,130.8 153,130.8 159,130.7 165,132.4 171,134.2 177,135.7 183,137.1 189,138.5 195,139.5 201,140.6 207,141 213,140.7 219,140.4 225,140.1 231,139.7 237,138.8 243,138.4 249,138.1 255,137.6 261,137 267,136 273,134.7 279,133.7 285,132.4 291,133.6 297,136.7 303,139 309,141.5 315,144.1 321,146.7 327,150.2 333,153.6 339,156.1 345,159.2 351,158.9 357,157.6 363,156.3 369,155 375,152.5 381,150.7 387,147.7 393,145 399,143.2 405,140.1 411,137.1 417,131.7 423,126.2 429,120.1 435,115 441,110 447,106.1 453,102 459,96.7 465,92 471,87.9 477,85.9 483,84 489,79.7 495,74.9 501,70 507,65.2 513,59.8 519,55.5 525,51.8 531,48.3 537,44.9 543,42.4 549,42.6 555,43.3 561,43.4 567,42.9 573,44.1 579,44.9 585,46.1 591,48.1 597,50.5 603,52.2 609,53.6 615,55.5 621,57.5 627,59.5 633,61 639,62.4 645,63.8 651,63.8 657,62.4 663,61.4 669,60.1 675,58.2 681,56.5 687,54.6 693,53.2 699,51.8 705,49.9 711,48.7 717,48.2 723,47.1 729,46.4 735,45.8 741,46 747,46.5 753,45.9 759,45.2 765,44.9 771,43.7 777,42.8 783,43 789,43 795,43.5 801,43.2 807,42.5 813,42.8 819,42.9 825,43.1 831,44.1 837,44.3 843,44.4 849,43.8 855,43.4 861,43.7 867,44.4 873,44.6 879,45.2 885,44.8 891,44.4 897,45.6 903,46.6 909,48.5 915,49.8 921,51.7 927,53.1 933,54.4 939,55.7 945,56.7 951,56.8 957,54.9 963,52.8 969,50.1 975,46.8 981,42.9 987,39.4 993,36" fill="none" stroke="#00ff00" stroke-width="1" stroke-linejoin="round"/>
<polyline points="21,135.2 27,138.4 33,142.2 39,145.9 45,153.9 51,164.9 57,173.4 63,173.9 69,175.7 75,171.7 81,163.3 87,155.9 93,152.3 99,148.3 105,142.3 111,137.1 117,131.9 123,128.9 129,125.8 135,127.4 141,128.2 147,129.8 153,132.7 159,135.6 165,137.4 171,140.2 177,141.7 183,141.5 189,141.3 195,141.5 201,141 207,140.4 213,139.9 219,139.4 225,138.6 231,138.4 237,137.2 243,136.8 249,136.8 255,136.6 261,135.6 267,134.9 273,132.6 279,130.6 285,128.2 291,131.7 297,138.5 303,145.4 309,152.3 315,160.1 321,161.7 327,161.8 333,161.9 339,159.9 345,158.3 351,156 357,153.4 363,150.7 369,150 375,146.8 381,145.3 387,142.1 393,139.2 399,136.4 405,133.4 411,128.8 417,121.3 423,113.1 429,103.8 435,96.6 441,91.2 447,91 453,90.8 459,89.7 465,87.4 471,84.6 477,80.9 483,77.1 489,69.6 495,62.5 501,55.4 507,49.5 513,42.4 519,41.3 525,41.2 531,41.2 537,40.3 543,42.4 549,44 555,45.3 561,45.6 567,45.6 573,45.8 579,45.8 585,47 591,50.5 597,55.5 603,58.6 609,61.4 615,64.1 621,64.5 627,63.6 633,63.3 639,63.4 645,63.6 651,63.1 657,61.3 663,59.5 669,56.8 675,52.8 681,49.8 687,47.9 693,46.9 699,46.9 705,46.9 711,47.6 717,48.5 723,47.2 729,46 735,44.7 741,44.4 747,44.4 753,44.5 759,44.5 765,45.1 771,42.9 777,41.2 783,41.5 789,41.5 795,41.8 801,43.4 807,43.7 813,44.2 819,44.3 825,44.5 831,44.7 837,44.9 843,44.6 849,43.3 855,42.2 861,42.6 867,43.8 873,44.6 879,47 885,47.3 891,46.3 897,47.4 903,48.6 909,49.9 915,52.2 921,57 927,58.8 933,60.1 939,61.4 945,61.2 951,56.6 957,50.9 963,45.4 969,38.7 975,32.5 981,29.2 987,27.8 993,26.5" fill="none" stroke="#ff0000" stroke-width="1" stroke-linejoin="round"/>
<path d="M9.5 129.8V137M21.5 132.4V144.7M27.5 134.2V151.7M33.5 156.2V172.4M45.5 151.4V159.4M51.5 154.6V200.6M57.5 187V193.4M69.5 157.7V166.1M87.5 141.9V156.9M111.5 116.7V127.1M117.5 117.4V127.1M123.5 117.4V127.1M129.5 117.4V132.9M141.5 117.4V136.8M147.5 121.3V136M153.5 132.4V144.1M159.5 135.9V144.8M171.5 138V149.3M183.5 135.9V144.5M189.5 136.8V145.2M195.5 136.8V143.7M213.5 133.2V140M243.5 131.1V138.2M249.5 134.7V139.8M279.5 122.7V135.4M291.5 123.9V152.3M297.5 140V172.4M309.5 157.8V179.5M315.5 157.1V171.3M327.5 157.3V167.5M345.5 152.3V159.2M357.5 146.3V154.1M369.5 143.5V155.3M399.5 128.8V140.6M429.5 76.9V94.7M435.5 81.1V96.4M447.5 84.7V99.2M477.5 67.7V80.5M489.5 10V48M495.5 25V48.8M501.5 40.8V48.8M507.5 40.8V48M519.5 34.5V41.8M525.5 34.5V41.8M531.5 34.5V43M543.5 40.8V48M549.5 41.2V55M555.5 41.2V55M567.5 27.5V41.2M573.5 26.2V56.2M585.5 40.8V55.5M591.5 42.5V62.5M597.5 53.2V69.2M615.5 60.9V68.5M633.5 54.8V64M645.5 60.8V77.7M663.5 50.6V60.6M675.5 40.1V49.7M687.5 39.5V48.4M693.5 42.5V52.5M699.5 40.8V52.6M705.5 45V50.3M717.5 44.9V49.6M729.5 39V48.4M741.5 39.9V50.4M759.5 38.3V44.3M765.5 37.1V48.6M777.5 34.7V45.1M783.5 33.3V51.6M795.5 40.5V52.6M813.5 38.5V47.6M825.5 41.5V52.8M831.5 42.4V46.8M843.5 41.4V50.8M855.5 25.9V43.7M861.5 39.6V48.3M867.5 45.3V49.7M897.5 40.8V59.2M921.5 59.2V70.2M933.5 53.4V69.6M939.5 53.4V69.6M963.5 26.9V34.6M981.5 21V35.6" stroke="#0000ff" fill="none"/>
<path d="M8 132.9h3v2.2h-3zM20 133.8h3v3h-3zM26 136.8h3v11.1h-3zM32 157.8h3v8.1h-3zM44 153h3v3.2h-3zM50 154.6h3v40.5h-3zM56 187h3v6.5h-3zM68 160h3v2.4h-3zM86 149.8h3v3h-3zM110 117.4h3v6.5h-3zM116 122.2h3v1.6h-3zM122 122.2h3v3.2h-3zM128 125.5h3v6.5h-3zM140 123.9h3v6.5h-3zM146 127.6h3v6.8h-3zM152 134.4h3v7.3h-3zM158 139.4h3v2.2h-3zM170 139.6h3v2h-3zM182 139.6h3v1.1h-3zM188 139.3h3v1.7h-3zM194 141.6h3v1.1h-3zM212 136.7h3v1.8h-3zM242 132.3h3v4.1h-3zM248 137.2h3v1.2h-3zM278 124.8h3v3.6h-3zM290 123.9h3v27.5h-3zM296 141.7h3v21h-3zM308 157.8h3v8.1h-3zM314 161.5h3v2.8h-3zM326 158.9h3v4.5h-3zM344 153.6h3v2.6h-3zM356 147.3h3v3h-3zM368 146.1h3v4h-3zM398 131.9h3v4h-3zM428 88.3h3v1.6h-3zM434 87.5h3v1.7h-3zM446 90.3h3v4.8h-3zM476 73.7h3v2.7h-3zM488 37.5h3v10h-3zM494 41.2h3v3.8h-3zM500 41.2h3v6.2h-3zM506 41.2h3v6.2h-3zM518 35h3v6.2h-3zM524 35h3v6.2h-3zM530 35h3v7.5h-3zM542 41.2h3v6.2h-3zM548 43.8h3v5h-3zM554 43.8h3v5h-3zM566 32.5h3v7.5h-3zM572 33.8h3v13.8h-3zM584 41.2h3v13.8h-3zM590 50h3v7.5h-3zM596 53.8h3v15h-3zM614 62.4h3v4.9h-3zM632 60.6h3v1.7h-3zM644 61.5h3v8.1h-3zM662 51.6h3v1.7h-3zM674 45.7h3v2.5h-3zM686 41.4h3v2.4h-3zM692 43.7h3v4.8h-3zM698 47.3h3v1.2h-3zM704 46.1h3v2.4h-3zM716 46.1h3v2.4h-3zM728 41h3v1.1h-3zM740 42.1h3v5.2h-3zM758 39.6h3v2.5h-3zM764 42.1h3v3.1h-3zM776 36.1h3v3.7h-3zM782 39.8h3v4.5h-3zM794 42.2h3v4.3h-3zM812 41.5h3v5.1h-3zM824 42.6h3v4.8h-3zM830 44.3h3v1.2h-3zM842 42.5h3v2.2h-3zM854 27.5h3v12.9h-3zM860 42.2h3v5h-3zM866 46.5h3v2h-3zM896 42.1h3v11.8h-3zM920 59.9h3v9.7h-3zM932 61.5h3v3.2h-3zM938 63.1h3v1.6h-3zM962 27.5h3v6.5h-3zM980 25.9h3v4.9h-3z" fill="#0000ff"/>
<path d="M15.5 132.7V137.5M39.5 148.1V172.4M63.5 159.4V200.6M75.5 152.5V164.3M81.5 143.1V158.8M93.5 134.2V159.5M99.5 141.3V150.6M105.5 117.4V133.6M135.5 117.4V131M165.5 138.9V146.4M177.5 140.6V146M201.5 131.7V144.2M207.5 136.7V142M219.5 137.4V144.2M225.5 137.1V145.4M231.5 136V143.9M237.5 130.5V144.2M255.5 136.8V207.3M261.5 131.7V143M267.5 127.2V134.3M273.5 117.4V138.4M285.5 110.3V131M303.5 157.8V187M321.5 155.6V165.3M333.5 152.3V167M339.5 147.4V162M351.5 141.9V163.2M363.5 144.6V151.8M375.5 138.9V151.2M381.5 133.9V143.1M387.5 132.4V141.9M393.5 130V135.4M405.5 123.8V137.9M411.5 109.3V134.2M417.5 89.2V124.5M423.5 86.6V105.1M441.5 84.9V93.7M453.5 86V99.9M459.5 80.4V91.1M465.5 76.5V84.9M471.5 75.4V80.3M483.5 67.9V81.8M513.5 34.5V49.2M537.5 33.2V41.8M561.5 34.5V49.2M579.5 41.2V53.8M603.5 60.8V69.2M609.5 54.9V70M621.5 55.7V68.7M627.5 60.1V68.3M639.5 58.5V65.3M651.5 58.2V71.1M657.5 49.3V61.3M669.5 43.9V55M681.5 41.1V51.2M711.5 45.4V54.4M723.5 39V53.4M735.5 40.6V48.9M747.5 42.5V51.2M753.5 41.5V53.8M771.5 34.9V48.1M789.5 38.8V48.1M801.5 39.6V47.5M807.5 38.8V47.2M819.5 40.3V49.8M837.5 35.5V47.2M849.5 27.5V46.9M873.5 45.5V53.1M879.5 46V55.4M885.5 37.1V53.2M891.5 39.1V47M903.5 53.7V57.7M909.5 53.8V57.2M915.5 52.3V57.1M927.5 58.3V77M945.5 52.5V66.8M951.5 41.4V55.5M957.5 31.7V41.1M969.5 20.1V42.7M975.5 20.1V28.2M987.5 26.9V34.6M993.5 26.5V31.8" stroke="#ff0000" fill="none"/>
<path d="M14 133.8h3v2.7h-3zM38 153h3v12.9h-3zM62 159.4h3v34h-3zM74 154.6h3v7.8h-3zM80 149.8h3v4.8h-3zM92 141.7h3v11.1h-3zM98 142.6h3v2.1h-3zM104 117.4h3v14.6h-3zM134 123.9h3v6.5h-3zM164 141.7h3v2.4h-3zM176 141.7h3v2.2h-3zM200 139.2h3v3.5h-3zM206 138.4h3v1.6h-3zM218 138.4h3v2.5h-3zM224 138.4h3v1.5h-3zM230 138.3h3v1.2h-3zM236 132.3h3v6h-3zM254 154.6h3v9.7h-3zM260 133.2h3v4.2h-3zM266 129h3v4.2h-3zM272 123.9h3v14.6h-3zM284 123.9h3v6.5h-3zM302 159.4h3v4.9h-3zM320 158.9h3v5.4h-3zM332 159.4h3v4h-3zM338 153.6h3v5.8h-3zM350 147.3h3v8.9h-3zM362 146.1h3v4.2h-3zM374 140h3v10.1h-3zM380 140h3v2h-3zM386 134.1h3v5.9h-3zM392 131.9h3v2.2h-3zM404 125.1h3v10.9h-3zM410 115.8h3v17.8h-3zM416 89.9h3v34h-3zM422 88.3h3v16.2h-3zM440 90.3h3v1.9h-3zM452 90.1h3v5h-3zM458 83.8h3v6.3h-3zM464 77.5h3v6.3h-3zM470 76.7h3v2.7h-3zM482 71.3h3v5.1h-3zM512 35h3v13.8h-3zM536 33.8h3v7.5h-3zM560 35h3v13.8h-3zM578 45h3v3.8h-3zM602 61.2h3v7.5h-3zM608 62.4h3v1.5h-3zM620 62.4h3v4.9h-3zM626 62.4h3v1.2h-3zM638 62.7h3v1.7h-3zM650 60.2h3v7.8h-3zM656 53.4h3v6.8h-3zM668 49h3v4.4h-3zM680 45.2h3v2.9h-3zM710 48.5h3v1.9h-3zM722 42.1h3v6.5h-3zM734 42.1h3v1.7h-3zM746 48.5h3v1.5h-3zM752 42.6h3v5.9h-3zM770 36.1h3v9h-3zM788 42.2h3v2.2h-3zM800 44.3h3v2.1h-3zM806 41.5h3v2.9h-3zM818 42.6h3v3.9h-3zM836 42.5h3v2.9h-3zM848 27.5h3v17.8h-3zM872 48.5h3v2.3h-3zM878 48.5h3v1.8h-3zM884 43.7h3v4.8h-3zM890 42.1h3v1.4h-3zM902 55h3v1.3h-3zM908 55h3v1.2h-3zM914 55h3v1h-3zM926 61.5h3v3.2h-3zM944 54h3v7.5h-3zM950 43h3v11h-3zM956 32.4h3v8.1h-3zM968 21h3v21h-3zM974 21h3v6.5h-3zM986 27.5h3v6.5h-3zM992 27.5h3v2.7h-3z" fill="#ff0000"/>
<polyline points="2.6,136.8 8.1,133.6 24.3,133.6 30.7,140 42.1,141.7 48.5,154.6 123,155.2 129.4,158.5 207.1,158.5 216.8,144.9 223.3,138.4 247.6,138.4 250.8,144.9 255.7,161.1 278.3,161.7 284.8,158.5 404.5,158.5 417.5,141.7 428.8,131.3 453.1,131.3 466,120.6 470.9,117.4 483.8,116.7 488.7,93.1 498.4,93.1 500,93.9 506.5,89 522.7,89 530.7,83.5 540.5,82.5 545.3,79.3 556.6,78.6 568,72.8 579.3,58.3 606.8,57.6 613.3,53.4 627.8,46.9 635.9,46.9 645.6,51.8 723.3,51.8 729.8,56.6 758.9,56.6 767,55 791.3,55 799.4,50.2 810.7,45.3 914.2,45.3 920.7,48.5 927.2,51.8 953.1,51.8 966,48.5 993.5,48.5" fill="none" stroke="#0000ff" stroke-width="3" stroke-linejoin="round"/>
<polyline points="2.6,131.9 19.4,131.9 27.5,136.8 32.4,144.9 35.6,149.7 48.5,149.7 51.8,161.1 63.1,161.1 69.6,164.3 77.7,164.3 80.9,169.2 93.9,169.2 103.6,161.1 111.7,156.2 118.1,141.7 123,138.4 139.2,138.4 142.4,135.2 190.9,135.2 194.2,138.4 210.4,140 226.5,143.3 233,138.4 241.1,133.6 249.2,136.8 255.7,164.3 268.6,164.3 275.1,161.1 284.8,157.8 297.7,157.8 305.8,154.6 310.7,149.7 326.9,148.1 336.6,151.4 346.3,164.3 351.1,164.3 360.8,157.8 372.2,153 388.3,144.9 402.9,141.7 420.7,120.6 430.4,110.9 440.1,106.7 456.3,106.1 466,96.3 470.9,88.3 482.2,81.8 485.4,78.5 490.3,60.7 500,57.6 509.7,51.8 514.6,48.5 530.7,45.3 537.2,36.2 545.3,43.7 582.5,42.1 595.5,48.5 629.4,51.8 642.4,63.1 652.1,63.1 658.6,58.3 668.3,61.5 684.5,59.9 694.2,55 707.1,50.2 723.3,48.5 746,48.5 752.4,50.2 771.8,45.3 791.3,45.3 801,42.1 826.9,42.1 830.1,45.3 849.5,45.3 862.5,48.5 901.3,48.5 917.5,53.4 927.2,59.9 946.6,59.9 953.1,53.4 966,50.2 985.4,45.3 993.5,42.1" fill="none" stroke="#ff0000" stroke-width="3" stroke-linejoin="round"/>
<polyline points="2.6,141.7 29.1,141.7 35.6,140 46.9,143.3 51.8,138.4 80.9,138.4 87.4,131.9 95.5,138.4 103.6,138.4 123,124.8 129.4,128.7 135.9,124.8 141.4,153 147.2,163.7 153.7,158.5 160.2,164.3 165,164.3 171.5,158.5 178,164.3 190.3,152.3 195.8,156.9 200.6,147.2 207.1,150.4 212.6,145.9 219.4,150.4 223.3,140 234.6,140 237.9,131.9 243.4,131.9 248.5,136.8 255.7,123.9 262.1,115.8 267,96.3 275.1,89.2 289.6,89.2 297.7,95.7 315.5,76.9 328.5,76.3 334.3,69.8 339.8,42.3 351.1,41.3 357.6,47.2 363.1,35.8 369.9,41.3 385.8,41.3 395.5,48.4 404.5,48.4 412.6,41.3 418.1,42.3 423.9,48.4 429.8,48.4 448.2,68.2 454,62.4 459.5,62.4 466,68.2 470.9,62.4 488.7,62.4 495.1,68.2 500,61.5 506.5,53.4 514.6,53.4 519.4,48.5 524.3,48.5 530.7,45.3 537.2,43.7 542.1,48.5 569.6,48.5 572.8,42.1 585.8,42.1 592.2,48.5 597.1,48.5 603.6,42.1 610,42.1 614.9,45.3 621.4,35.6 627.8,40.5 634.3,45.3 639.2,42.1 645.6,46.9 657,41.4 663.4,46.9 668.3,42.1 676.4,48.5 686.1,42.1 692.6,45.3 700,35 707.1,45.3 713.6,48.5 731.4,48.5 736.2,42.1 741.1,42.1 744.3,48.5 747.6,55 765.4,55 771.8,68 778.3,61.5 791.3,61.5 799.4,45.3 807.4,34 813.9,34 823.6,22.7 826.9,22.7 831.7,27.5 842.4,27.5" fill="none" stroke="#008000" stroke-width="3" stroke-linejoin="round"/>
<path d="M8 297h3v1h-3zM20 297h3v1h-3zM26 297h3v1h-3zM32 277h3v21h-3zM38 289h3v9h-3zM44 281h3v17h-3zM50 266h3v32h-3zM62 287h3v11h-3zM68 293h3v5h-3zM74 283h3v15h-3zM80 289h3v9h-3zM86 291h3v7h-3zM98 289h3v9h-3zM104 284h3v14h-3zM110 290h3v8h-3zM122 289h3v9h-3zM128 297h3v1h-3zM134 293h3v5h-3zM140 288h3v10h-3zM152 289h3v9h-3zM158 276h3v22h-3zM164 285h3v13h-3zM176 293h3v5h-3zM194 282h3v16h-3zM200 297h3v1h-3zM206 297h3v1h-3zM230 297h3v1h-3zM254 238h3v60h-3zM266 297h3v1h-3zM272 293h3v5h-3zM278 288h3v10h-3zM284 288h3v10h-3zM290 291h3v7h-3zM296 290h3v8h-3zM302 285h3v13h-3zM308 292h3v6h-3zM338 287h3v11h-3zM344 297h3v1h-3zM350 297h3v1h-3zM356 289h3v9h-3zM374 278h3v20h-3zM380 281h3v17h-3zM386 282h3v16h-3zM392 297h3v1h-3zM398 293h3v5h-3zM404 292h3v6h-3zM410 287h3v11h-3zM416 251h3v47h-3zM422 285h3v13h-3zM428 269h3v29h-3zM446 288h3v10h-3zM452 290h3v8h-3zM458 281h3v17h-3zM464 250h3v48h-3zM470 282h3v16h-3zM482 291h3v7h-3zM488 282h3v16h-3zM494 289h3v9h-3zM500 297h3v1h-3zM512 293h3v5h-3zM536 297h3v1h-3zM542 297h3v1h-3zM548 291h3v7h-3zM554 295h3v3h-3zM560 294h3v4h-3zM566 294h3v4h-3zM572 292h3v6h-3zM578 295h3v3h-3zM584 295h3v3h-3zM590 296h3v2h-3zM596 293h3v5h-3zM602 293h3v5h-3zM608 296h3v2h-3zM614 297h3v1h-3zM626 297h3v1h-3zM632 294h3v4h-3zM638 295h3v3h-3zM644 296h3v2h-3zM650 295h3v3h-3zM656 297h3v1h-3zM674 294h3v4h-3zM680 296h3v2h-3zM692 296h3v2h-3zM704 295h3v3h-3zM710 296h3v2h-3zM728 294h3v4h-3zM734 296h3v2h-3zM740 296h3v2h-3zM746 296h3v2h-3zM752 295h3v3h-3zM758 295h3v3h-3zM776 297h3v1h-3zM782 295h3v3h-3zM800 297h3v1h-3zM806 295h3v3h-3zM812 297h3v1h-3zM818 296h3v2h-3zM824 296h3v2h-3zM836 295h3v3h-3zM842 296h3v2h-3zM854 287h3v11h-3zM860 294h3v4h-3zM872 293h3v5h-3zM878 295h3v3h-3zM890 297h3v1h-3zM896 297h3v1h-3zM908 297h3v1h-3zM914 296h3v2h-3zM920 296h3v2h-3zM926 293h3v5h-3zM932 293h3v5h-3zM938 295h3v3h-3zM956 293h3v5h-3zM962 295h3v3h-3zM968 296h3v2h-3zM974 291h3v7h-3zM980 294h3v4h-3zM986 297h3v1h-3z" fill="#008000"/>
<path d="M3 375.5H999" stroke="#808080" fill="none"/>
<polyline points="2.5,387 100,388.8 200,388.8 275,386.2 350,387 425,386.2 475,382.5 525,376.2 575,368.8 643,362.5 645,362 725,352.5 837.5,337.5 887.5,332.5 992.5,331.2" fill="none" stroke="#ffc0cb" stroke-width="1" stroke-linejoin="round"/>
<path d="M9 375h1v1h-1zM15 375h1v1h-1zM21 375h1v1h-1zM27 375h1v1h-1zM87 375h1v1h-1zM159 375h1v1h-1zM165 375h1v1h-1zM207 375h1v1h-1zM213 375h1v1h-1zM219 375h1v1h-1zM225 375h1v1h-1zM231 375h1v1h-1zM237 375h1v1h-1zM243 375h1v1h-1zM249 375h1v1h-1zM255 375h1v1h-1zM261 375h1v1h-1zM291 375h1v1h-1zM351 375h1v1h-1zM357 375h1v1h-1zM363 375h1v1h-1zM543 375h1v1h-1zM663 375h1v1h-1zM669 375h1v1h-1zM675 375h1v1h-1zM681 375h1v1h-1zM687 375h1v1h-1zM693 375h1v1h-1zM699 375h1v1h-1zM705 375h1v1h-1zM711 375h1v1h-1zM717 375h1v1h-1zM723 375h1v1h-1zM729 375h1v1h-1zM735 375h1v1h-1zM741 375h1v1h-1zM747 375h1v1h-1zM753 375h1v1h-1zM759 375h1v1h-1zM765 375h1v1h-1zM771 375h1v1h-1zM777 375h1v1h-1zM783 375h1v1h-1zM789 375h1v1h-1zM795 375h1v1h-1zM801 375h1v1h-1zM807 375h1v1h-1zM813 375h1v1h-1zM819 375h1v1h-1zM825 375h1v1h-1zM831 375h1v1h-1zM837 375h1v1h-1zM843 375h1v1h-1zM849 375h1v1h-1zM855 375h1v1h-1zM861 375h1v1h-1zM867 375h1v1h-1zM873 375h1v1h-1zM879 375h1v1h-1zM885 375h1v1h-1zM951 375h1v1h-1zM957 375h1v1h-1z" fill="#ff0000"/>
<path d="M33.5 375V378.8M39.5 375V381M45.5 375V383.2M51.5 375V387M57.5 375V390.3M63.5 375V388.2M69.5 375V384.3M75.5 375V381.7M81.5 375V379.5M93.5 372.7V376M99.5 370.5V376M105.5 368.8V376M111.5 367.2V376M117.5 365.7V376M123.5 365.8V376M129.5 367.4V376M135.5 368.6V376M141.5 369.7V376M147.5 370.8V376M153.5 372.2V376M171.5 375V377.8M177.5 375V378.7M183.5 375V378.4M189.5 375V378.1M195.5 375V377.8M201.5 375V377.6M267.5 372.7V376M273.5 372.3V376M279.5 372.5V376M285.5 372.9V376M297.5 375V378.5M303.5 375V380.3M309.5 375V381.1M315.5 375V382.5M321.5 375V381.7M327.5 375V381.3M333.5 375V381.3M339.5 375V380M345.5 375V377.9M369.5 373.2V376M375.5 372.8V376M381.5 372.3V376M387.5 370.7V376M393.5 369.1V376M399.5 368.4V376M405.5 367.1V376M411.5 364.2V376M417.5 361.3V376M423.5 360.4V376M429.5 361.4V376M435.5 362.4V376M441.5 363.3V376M447.5 364.2V376M453.5 365.1V376M459.5 366V376M465.5 366.9V376M471.5 367.7V376M477.5 368.4V376M483.5 367.7V376M489.5 365.6V376M495.5 363.8V376M501.5 365.1V376M507.5 366.3V376M513.5 367.4V376M519.5 369.5V376M525.5 372.1V376M531.5 372.7V376M537.5 373.2V376M549.5 375V378.3M555.5 375V379.8M561.5 375V381.2M567.5 375V382.3M573.5 375V382.6M579.5 375V382.3M585.5 375V382.8M591.5 375V384.3M597.5 375V385.7M603.5 375V386.1M609.5 375V385.7M615.5 375V385.3M621.5 375V384.8M627.5 375V383.9M633.5 375V383.5M639.5 375V383.1M645.5 375V390.5M651.5 375V385.3M657.5 375V381.2M891.5 375V379.1M897.5 375V379.8M903.5 375V380.4M909.5 375V381M915.5 375V381.4M921.5 375V381.5M927.5 375V381.1M933.5 375V380.5M939.5 375V378.7M945.5 375V378.2M963.5 373.4V376M969.5 371V376M975.5 368.7V376M981.5 368.4V376M987.5 368.8V376M993.5 370.3V376" stroke="#ff0000" fill="none"/>
<polyline points="2.5,367.5 27.5,368.8 45,380 57.5,391.2 65,391.2 82.5,386.2 100,376.2 120,366.2 147.5,365 175,373.8 205,374.5 250,373 275,370 287.5,369.5 300,378.8 315,385 335,387 355,382.5 380,377.5 402.5,368.8 420,355 440,348.8 462.5,345 480,342.5 495,333.8 515,331.2 537.5,333.8 562.5,343.8 582.5,350 600,360 620,366.2 643,371.2 645,378.8 662.5,369.5 700,368 775,368 825,370 850,372 887.5,375 912.5,380 932.5,382.5 950,380 962.5,375 975,367.5 985,364.5 992.5,364.5" fill="none" stroke="#ffff00" stroke-width="1" stroke-linejoin="round"/>
<polyline points="2.5,367.5 27.5,368 50,375 70,383 87.5,383.8 112.5,377.5 130,372.5 147.5,368.8 175,371.2 205,373.2 270,373 287.5,371.2 307.5,377.5 325,381.2 345,383 370,381.2 395,377.5 420,368.8 440,359.5 465,352 487.5,346.2 507.5,340 525,335 545,335.5 570,340 595,348.8 625,360 643,365 650,367 662.5,368.2 725,367.5 775,367 825,368.8 875,371.2 900,373.8 922.5,376.2 937.5,379.2 955,378 970,374.5 992.5,368.8" fill="none" stroke="#0000ff" stroke-width="1" stroke-linejoin="round"/>
<path d="M3 436.5H994" stroke="#0000ff" fill="none"/>
<path d="M3 474.5H994" stroke="#ff0000" fill="none"/>
<polyline points="2.5,464.5 15,458 27.5,459.5 42.5,466.2 60,475 75,460 87.5,447.5 100,440 110,430.5 120,428.8 140,431.2 150,437.5 160,452.5 172.5,462.5 190,462.5 207.5,466.2 230,459.5 240,448.8 252.5,441.2 272.5,432 285,432 295,442.5 307.5,452.5 322.5,457.5 345,458.8 367.5,455 380,446.2 392.5,435 410,434.5 422.5,429.2 435,431.2 457.5,436.2 482.5,428.8 500,435 522.5,438.8 542.5,442 562.5,451.2 572.5,456.2 587.5,472.5 600,483 617.5,481.2 632.5,478 646.2,477 660,466.2 670,451.2 680,441.2 692.5,433.8 700,428 715,433 735,433.8 742.5,446.2 750,454.5 756.2,450 762.5,440 771.2,437 782.5,441.2 795,452.5 812.5,452 822.5,453.8 832.5,462.5 843.8,470 850,462.5 861.2,455.5 870,457 880,462.5 887.5,460.8 897.5,459.5 910,468 922.5,475 932.5,475.5 945,465 955,447.5 963.8,435 975,431.2 987.5,429.5 992.5,431.2" fill="none" stroke="#ff0000" stroke-width="1" stroke-linejoin="round"/>
<polyline points="2.5,461.2 13.8,457 21.2,461.2 27,458.2 33.8,468.8 43.8,469.5 57.5,479.5 62.5,468.8 82.5,446.2 93.8,442.5 98.8,432.5 106.2,428 117.5,429.5 128.8,431.2 136.2,430 145,435 150,445 157.5,457.5 172.5,464.5 188.8,462 196.2,468 206.2,463 217.5,462.5 231.2,457.5 237,440 247.5,444.5 253.8,437 272.5,430.5 285,432.5 296.2,451.2 315,458 325,458.8 335,457.5 345,460.8 350,457.5 367.5,453.2 373.8,442.5 380,441.2 386.2,432 392.5,432 398.8,439.2 405,431.2 412.5,431.2 422.5,427 435,432.5 450,436.2 465,431.2 475,430.5 482.5,427 495,435 507.5,441.2 511.2,438 520,440 535,441.2 555,452.5 560,451.2 575,466.2 585,477.5 596.2,485 607.5,479.5 615,483 630,477.5 630,477.5 645,478 657.5,459.5 663.8,455.5 670,439.5 682.5,439.5 687.5,431.2 698.8,425.5 707.5,432.5 716.2,435.5 722.5,429.5 730,433.8 736.2,440 741.2,462.5 747.5,459.5 753.8,441.2 759.2,432.5 765,443.8 771.2,434.5 777.5,440 783,453 788.8,449.5 795,457 800,451.2 807,448 813,457 818.8,451.2 825,459.5 831.2,473 837,464.5 843,476.2 848.8,455.5 854.5,452.5 861.2,457.5 872.5,461.2 879.5,468 885,457.5 891.2,453.8 897.5,464.5 908.8,472 915.5,473.8 921.2,480 927.5,474.5 936.2,468.8 945,454.5 950,442 956.2,432.5 968.8,432.5 975,428.8 985,431.8 992.5,431.8" fill="none" stroke="#0000ff" stroke-width="1" stroke-linejoin="round"/>
<path d="M1091.5 108.6V165M1097.5 108.6V165.9M1103.5 108.6V165.9M1109.5 108.6V165.9M1115.5 108.6V167.7M1121.5 108.6V171.7M1127.5 108.6V172.6M1133.5 108.6V172.9M1139.5 108.6V173.2M1145.5 108.6V173.5M1151.5 108.6V173.8M1157.5 108.6V174.2M1163.5 116.6V174.6M1169.5 125.6V175.1M1175.5 128.1V175.5M1181.5 128.1V173.7M1187.5 128.1V170.7M1193.5 128.1V168.4M1199.5 128.1V166.9M1205.5 128.1V165.9M1211.5 128.1V165.9M1217.5 129V165.9M1223.5 134.6V166.1M1229.5 145.4V167.6M1235.5 156.2V169.1M1241.5 169.2V175.4M1247.5 171.4V176.5M1253.5 171.4V176.8M1259.5 171.4V177M1265.5 171.4V177.2M1271.5 171.4V177M1277.5 171.4V176.8M1283.5 171.4V176.6M1289.5 171.4V176.4M1295.5 171.4V176.2M1301.5 171.4V176M1307.5 171.4V175.8M1313.5 171.4V175.6M1319.5 171.4V180.1M1325.5 165.9V175M1331.5 151.5V162.7M1667.5 120V122.4M1673.5 120V123.3M1679.5 120V123.4M1685.5 120V123.4M1691.5 120V123.5M1697.5 120V123.6M1703.5 120V123.7M1709.5 120V123.7M1715.5 120V123.8M1721.5 120V123.9M1727.5 120V121.8M1757.5 120V122.8M1763.5 120V124.6M1769.5 120V126.5M1775.5 120V128.1M1781.5 120V128.1M1787.5 120V128.1M1793.5 120V128.1M1799.5 120V128.1M1805.5 120V128.1M1811.5 120V128.1M1817.5 120V128.1M1823.5 120V128.1M1829.5 120V128.1M1835.5 120V128.1M1841.5 120V128.1M1847.5 120V128.1M1853.5 120V128.1M1859.5 120V128.1M1865.5 120.1V128.1M1871.5 122.5V128.1M1877.5 122.7V128.4M1883.5 122.9V128.8M1889.5 123V129.1M1895.5 123.1V129.4M1901.5 123.2V131M1907.5 132.3V144.1M1913.5 132.3V147.8M1919.5 132.3V148.2M1925.5 132.3V148.5M1931.5 132.3V148.5M1937.5 132.3V148.5M1943.5 132.3V148.5M1949.5 132.3V148.5M1955.5 132.3V148.5M1961.5 132.3V144M1967.5 132.3V140M1973.5 134.6V152M1979.5 134.6V152.3M1985.5 134.6V152.2M1991.5 134.6V152M1997.5 134.6V151.9M2003.5 134.6V151.8M2009.5 134.6V151.7M2015.5 134.6V151.6M2021.5 134.6V151.4M2027.5 134.4V140.4M2033.5 131.4V134.6" stroke="#0000ff" fill="none"/>
<path d="M1337.5 143.4V148.1M1343.5 136.5V144.7M1349.5 136.1V141.7M1355.5 135.6V141.7M1361.5 135.2V141.7M1367.5 136.1V141.7M1373.5 135.9V141.7M1379.5 132.9V141.7M1385.5 129.9V141.7M1391.5 126.9V141.7M1397.5 123.9V139.5M1403.5 123.4V136.8M1409.5 123V136.8M1415.5 122.6V136.8M1421.5 120.4V136.8M1427.5 116.9V136.8M1433.5 116.1V136.8M1439.5 113.5V136.8M1445.5 108.4V136.8M1451.5 104.2V136.8M1457.5 103.6V136.8M1463.5 103V136.8M1469.5 101.2V136.8M1475.5 98.7V136.8M1481.5 96.2V136.8M1487.5 94.6V136.8M1493.5 94.4V136.8M1499.5 94.1V136.8M1505.5 93.9V136.8M1511.5 93.6V136.8M1517.5 93.4V136.8M1523.5 93.1V136.8M1529.5 90.3V136.8M1535.5 87.3V136.8M1541.5 85.7V136.8M1547.5 88.7V136.8M1553.5 89.9V136.8M1559.5 89.9V136.8M1565.5 91.6V136.8M1571.5 101.5V136.8M1577.5 112.7V136.8M1583.5 113.4V120M1589.5 113.8V120M1595.5 114.2V120M1601.5 114.5V120M1607.5 114.9V120M1613.5 115.2V120M1619.5 115.5V120M1625.5 115.8V120M1631.5 116.1V120M1637.5 116.4V120M1643.5 116.7V120M1649.5 117.9V120M1739.5 116.4V120M1745.5 117.6V120M2057.5 99.1V109.4M2063.5 97.4V108.7M2069.5 97.4V108.7M2075.5 94.8V108.7" stroke="#ff0000" fill="none"/>
<polyline points="1085.8,162.7 1092.9,165.9 1112.4,165.9 1122.1,172.4 1154.4,174 1177.1,175.6 1190,169.2 1203,165.9 1222.4,165.9 1235.3,169.2 1241.8,176.3 1264.5,177.2 1313,175.6 1319.5,180.5 1326,174 1332.4,159.4 1338.9,136.8 1361.6,135.2 1371.3,136.8 1397.2,123.9 1419.8,122.2 1423,117.4 1436,115.8 1442.5,110.9 1448.9,104.4 1465.1,102.8 1484.5,94.7 1523.4,93.1 1539.5,85 1549.3,89.9 1563.8,89.9 1570.3,99.6 1575.1,112.5 1584.9,113.6 1612.4,115.2 1644.7,116.8 1670.6,123.3 1722.4,123.9 1741.8,115.2 1748.3,120 1774.2,128.1 1806.5,128.1 1871.3,128.1 1900.4,129.7 1903.6,136.2 1908.5,147.5 1923,148.5 1955.4,148.5 1966.7,139.4 1973.2,152.4 2021.7,151.4 2028.2,137.8 2033.1,134.6 2039.5,131.4 2046,123.3 2052.5,121.7 2057.3,97.4 2073.5,97.4 2080,86.1" fill="none" stroke="#00ffff" stroke-width="1" stroke-linejoin="round"/>
<polyline points="1085.8,108.6 1157.7,108.6 1170.6,128.1 1215.9,128.1 1222.4,133.6 1238.6,162.7 1241.8,171.4 1322.7,171.4 1332.4,148.1 1342.1,148.1 1343.8,141.7 1395.5,141.7 1398.8,136.8 1578.4,136.8 1580,120 1864.8,120 1871.3,122.6 1903.6,123.3 1904.6,132.3 1968.3,132.3 1971.6,134.6 2026.6,134.6 2033.1,131.4 2039.5,130.4 2046,122.6 2050.9,121.7 2057.3,108.7 2080,108.7" fill="none" stroke="#ff0000" stroke-width="1" stroke-linejoin="round"/>
<polyline points="1085.8,51 1144.7,67.2 1209.4,81.8 1274.2,93.1 1338.9,102.8 1403.6,107.7 1436,112.5 1468.3,115.8 1500.7,120.6 1533.1,127.1 1578.4,133.6 1580,116.8 1644.7,129.7 1741.8,134.6 1838.9,135.6 1903.6,131.4 1968.3,120 2033.1,108.7 2080,102.2" fill="none" stroke="#ffff00" stroke-width="1" stroke-linejoin="round"/>
<polyline points="1085.8,127.1 1112.4,138.4 1144.7,151.4 1177.1,159.4 1209.4,162 1241.8,159.4 1274.2,156.2 1306.5,151.4 1338.9,146.5 1371.3,140 1403.6,133.6 1436,127.1 1468.3,123.9 1500.7,123.9 1549.3,122.2 1578.4,120.6 1580,103.9 1612.4,113.6 1660.9,112.9 1715.9,116.8 1774.2,124.9 1838.9,129.7 1903.6,129.7 1936,120 1984.5,111.9 2033.1,103.9 2080,95.8" fill="none" stroke="#800080" stroke-width="1" stroke-linejoin="round"/>
<polyline points="1181,174.3 1187,170.4 1193,167 1199,164.3 1205,161.9 1211,160.7 1217,159.8 1223,158.5 1229,156.5 1235,154.6 1241,152.7 1247,150.1 1253,147.6 1259,145.4 1265,143.2 1271,141.2 1277,139.3 1283,137.6 1289,136.1 1295,134.7 1301,133.4 1307,132.1 1313,130.6 1319,129.2 1325,127.9 1331,125.2 1337,122.7 1343,120.1 1349,117.7 1355,115.4 1361,112.9 1367,110.5 1373,107.9 1379,105.3 1385,103 1391,101 1397,99 1403,96.8 1409,94.6 1415,92.6 1421,92.1 1427,92.1 1433,92.4 1439,92.6 1445,93.5 1451,93.8 1457,93.9 1463,94.7 1469,96 1475,97.3 1481,98.8 1487,100.8 1493,102.7 1499,104.7 1505,106.8 1511,108.8 1517,110.4 1523,112.1 1529,113.3 1535,114 1541,114.6 1547,115 1553,115.7 1559,116.2 1565,116.3 1571,116.4 1577,117 1583,118.2 1589,119.6 1595,120.9 1601,122.3 1607,123.5 1613,124.8 1619,126.2 1625,127.3 1631,128.2 1637,129 1643,130.4 1649,132 1655,133.7 1661,134.8 1667,135.7 1673,136.3 1679,137 1685,136.7 1691,136.7 1697,136.4 1703,135.6 1709,134.9 1715,134.1 1721,133.2 1727,132.4 1733,131.8 1739,131 1745,130.1 1751,129.9 1757,130.1 1763,129.9 1769,129.7 1775,129.8 1781,130.1 1787,130.9 1793,131.5 1799,132.2 1805,133.3 1811,134.3 1817,134.6 1823,134.6 1829,134.7 1835,135.1 1841,135.6 1847,136 1853,136.3 1859,136.5 1865,136.8 1871,136.7 1877,135.7 1883,134.5 1889,132.9 1895,131 1901,129.1 1907,126.5 1913,123.9 1919,121.2 1925,118.8 1931,116.4 1937,114.5 1943,112.8 1949,111 1955,109.3 1961,107.5 1967,105.7 1973,103.6 1979,101.6 1985,99.5 1991,96.9 1997,93.9 2003,91.3 2009,89.3 2015,87.5 2021,85.6 2027,83.5 2033,81.7 2039,80 2045,78.2 2051,76.6 2057,74.6 2063,72.3 2069,69.5 2075,66.4" fill="none" stroke="#00ffff" stroke-width="1" stroke-linejoin="round"/>
<polyline points="1163,179.5 1169,178.8 1175,177.7 1181,174.3 1187,170.4 1193,167 1199,164.3 1205,161.9 1211,160.7 1217,159.8 1223,158.5 1229,156.5 1235,154.6 1241,151.2 1247,147 1253,142.8 1259,139 1265,135.2 1271,131.1 1277,127 1283,122.9 1289,119.3 1295,115.9 1301,112.5 1307,109 1313,105.2 1319,101.4 1325,98.1 1331,96.4 1337,95.5 1343,94.4 1349,93 1355,91.8 1361,89.6 1367,87.4 1373,85.5 1379,84 1385,82.9 1391,82.3 1397,82.8 1403,82.8 1409,82.8 1415,82.8 1421,83.8 1427,84.9 1433,86.5 1439,87.9 1445,90.6 1451,93 1457,95.3 1463,98.8 1469,102.3 1475,105.6 1481,108.9 1487,112 1493,115.1 1499,118.2 1505,121.5 1511,124.6 1517,127 1523,129.7 1529,132 1535,133.4 1541,134.2 1547,134.7 1553,135.4 1559,136.1 1565,136 1571,135.3 1577,135.5 1583,135.7 1589,136.3 1595,135.6 1601,135.1 1607,134.8 1613,133.6 1619,132.4 1625,130.9 1631,129.4 1637,128 1643,127.1 1649,126.5 1655,125.8 1661,125.3 1667,125.2 1673,125.1 1679,125.8 1685,126.9 1691,128.3 1697,129.5 1703,130.7 1709,132.2 1715,134.3 1721,135.9 1727,136.6 1733,136.8 1739,136.5 1745,136.3 1751,136.7 1757,137.5 1763,138 1769,137.7 1775,137.4 1781,137.3 1787,137.6 1793,137.1 1799,136.4 1805,135.4 1811,134.6 1817,133.8 1823,133 1829,132.6 1835,133 1841,133.5 1847,134.2 1853,134.7 1859,135 1865,135.1 1871,134.9 1877,133.3 1883,131.4 1889,129.5 1895,127.2 1901,124 1907,119.6 1913,115.5 1919,112.3 1925,109.4 1931,106.4 1937,103.3 1943,100.7 1949,98.2 1955,95.9 1961,93.1 1967,90.3 1973,87.2 1979,83.6 1985,79.3 1991,74.7 1997,70.1 2003,66 2009,62.1 2015,58.5 2021,55.6 2027,54 2033,52.7 2039,51.7 2045,50.9 2051,50.6 2057,50.7 2063,50.3 2069,49.8 2075,49.1" fill="none" stroke="#006400" stroke-width="1" stroke-linejoin="round"/>
<polyline points="1151,180.9 1157,180.2 1163,179.5 1169,178.8 1175,177.7 1181,174.3 1187,170.4 1193,167 1199,164.3 1205,161.9 1211,159.1 1217,156.9 1223,154.1 1229,150.9 1235,147.4 1241,143.6 1247,138.5 1253,133.3 1259,128.5 1265,124 1271,119.4 1277,114.8 1283,110.3 1289,106.2 1295,102.5 1301,100.7 1307,99.5 1313,97.9 1319,95.8 1325,94 1331,91.2 1337,88.5 1343,86.1 1349,84.5 1355,83.4 1361,82.2 1367,82.4 1373,82.4 1379,82.1 1385,82.1 1391,82.6 1397,83.2 1403,83.2 1409,82.9 1415,82.7 1421,83.5 1427,84.6 1433,87 1439,89.4 1445,93.1 1451,96.4 1457,99.3 1463,103.3 1469,107.4 1475,111.2 1481,115.4 1487,119.2 1493,123.1 1499,127.2 1505,131.6 1511,135 1517,137.7 1523,141.1 1529,143.6 1535,145.3 1541,145.7 1547,145.5 1553,144.4 1559,143.1 1565,139.4 1571,136.4 1577,134.8 1583,133.2 1589,131.8 1595,130.5 1601,129.2 1607,127.8 1613,126.5 1619,125.1 1625,123 1631,121.4 1637,120.4 1643,119.8 1649,120.4 1655,122.1 1661,123.8 1667,125.9 1673,128.1 1679,130.8 1685,134 1691,136.9 1697,138 1703,138.1 1709,138 1715,137.8 1721,137.3 1727,137 1733,137.2 1739,137 1745,137.3 1751,138.3 1757,139.7 1763,140 1769,139 1775,137.5 1781,136.4 1787,135.9 1793,134.9 1799,133.6 1805,132.6 1811,131.7 1817,131.2 1823,131.1 1829,131.4 1835,132.5 1841,133.9 1847,135 1853,135.4 1859,136.1 1865,136.4 1871,135 1877,131.7 1883,128.9 1889,126.8 1895,124.5 1901,121.7 1907,117.2 1913,113 1919,108.9 1925,105 1931,101.2 1937,97.8 1943,94.5 1949,90.6 1955,86.2 1961,81.1 1967,76.3 1973,71.7 1979,67.1 1985,62.6 1991,58.7 1997,56 2003,53.7 2009,51.8 2015,50.5 2021,49.5 2027,49.8 2033,50.4 2039,51 2045,51.4 2051,52 2057,51.4 2063,50 2069,48.4 2075,46.5" fill="none" stroke="#ff6600" stroke-width="1" stroke-linejoin="round"/>
<polyline points="1121,183.1 1127,183.2 1133,183.4 1139,182.7 1145,181.7 1151,179.8 1157,178.4 1163,177 1169,176.4 1175,174.8 1181,168.9 1187,161.5 1193,153.8 1199,147.7 1205,142 1211,138.4 1217,135.3 1223,131.1 1229,125.4 1235,120 1241,118.3 1247,115.5 1253,112.9 1259,109.4 1265,105.9 1271,100.3 1277,94.3 1283,89.5 1289,87 1295,85 1301,83.1 1307,83.5 1313,82.9 1319,82.2 1325,82.1 1331,82.2 1337,82.7 1343,82.6 1349,82 1355,81.9 1361,81.2 1367,81.3 1373,82 1379,82.1 1385,82.1 1391,83.1 1397,83.8 1403,83.8 1409,83.8 1415,83.4 1421,85.7 1427,88 1433,92 1439,96.7 1445,104.1 1451,109.7 1457,114.8 1463,122.8 1469,131 1475,139.1 1481,145 1487,150.5 1493,154.1 1499,157.7 1505,159.1 1511,160.3 1517,160.5 1523,159.4 1529,156.3 1535,151.6 1541,146.3 1547,140.4 1553,134.7 1559,128.5 1565,119.8 1571,112.6 1577,109.1 1583,107 1589,107.3 1595,109.4 1601,112 1607,115.1 1613,118.3 1619,121.7 1625,126.3 1631,130.2 1637,131.7 1643,132.6 1649,133.4 1655,134.8 1661,135.7 1667,136.6 1673,138 1679,139.9 1685,141.8 1691,143.6 1697,144.3 1703,143.5 1709,142.5 1715,140.8 1721,139 1727,137.5 1733,136.3 1739,134 1745,132.7 1751,133.1 1757,135.2 1763,136.5 1769,135.5 1775,134.2 1781,133.8 1787,134.4 1793,133.4 1799,133.2 1805,132.5 1811,130.2 1817,127.3 1823,125.6 1829,127.2 1835,130.7 1841,134.1 1847,135.7 1853,137.5 1859,139 1865,140.2 1871,139.8 1877,136.1 1883,132.2 1889,126.3 1895,118.3 1901,109.4 1907,98.6 1913,88.6 1919,78.8 1925,69.9 1931,62.6 1937,59.4 1943,56.8 1949,54.9 1955,54.1 1961,52.9 1967,54 1973,54.8 1979,55.4 1985,55.4 1991,54.8 1997,52.6 2003,50.7 2009,48.7 2015,46.8 2021,46.1 2027,45.5 2033,46 2039,46.6 2045,47.3 2051,49.2 2057,50.2 2063,49.4 2069,48.1 2075,46.2" fill="none" stroke="#00ff00" stroke-width="1" stroke-linejoin="round"/>
<polyline points="1103,187.8 1109,184.8 1115,183.4 1121,181.4 1127,180.8 1133,180.8 1139,181 1145,180 1151,178.2 1157,176 1163,173.2 1169,171.7 1175,169.6 1181,159.7 1187,147.1 1193,134.4 1199,123.8 1205,114.4 1211,117.2 1217,123.6 1223,127.9 1229,127.1 1235,125.5 1241,119.4 1247,107.5 1253,97.8 1259,91.6 1265,86.3 1271,81.2 1277,81.1 1283,81.2 1289,82.3 1295,83.6 1301,84.9 1307,85.9 1313,84.5 1319,82 1325,80.6 1331,79.4 1337,79.5 1343,80.8 1349,82 1355,83.2 1361,83.1 1367,83 1373,83.1 1379,82.1 1385,81 1391,83.1 1397,84.5 1403,84.4 1409,85.4 1415,85.9 1421,88.3 1427,91.5 1433,99.6 1439,108 1445,122.3 1451,131 1457,138.2 1463,145.9 1469,154.1 1475,155.8 1481,159.1 1487,162.8 1493,162.4 1499,161.4 1505,162.3 1511,161.4 1517,158.2 1523,156.4 1529,151.2 1535,140.9 1541,131.2 1547,122.7 1553,112.9 1559,105.8 1565,98.7 1571,93.9 1577,95.5 1583,101 1589,108.9 1595,120.1 1601,130 1607,134.7 1613,135.5 1619,134.5 1625,132.4 1631,130.4 1637,128.8 1643,129.8 1649,132.4 1655,137.2 1661,141 1667,144.4 1673,146.2 1679,147.5 1685,146.4 1691,146.2 1697,144.1 1703,140.8 1709,137.5 1715,135.2 1721,131.7 1727,130.9 1733,131.8 1739,130.5 1745,130.2 1751,134.4 1757,139.5 1763,141.3 1769,140.5 1775,138.2 1781,133.2 1787,129.3 1793,125.5 1799,125.9 1805,126.9 1811,127.3 1817,125.4 1823,125.7 1829,128.6 1835,134.6 1841,140.9 1847,146 1853,149.3 1859,149.5 1865,145.9 1871,138.8 1877,126.2 1883,115.1 1889,103.2 1895,90.7 1901,80.1 1907,71 1913,62.1 1919,54.3 1925,49 1931,45.1 1937,47.8 1943,51.5 1949,55.5 1955,59.2 1961,60.7 1967,60.2 1973,58.1 1979,55.3 1985,51.7 1991,48.9 1997,45.1 2003,43.2 2009,42.1 2015,42 2021,43.3 2027,46 2033,48.7 2039,51.1 2045,52.7 2051,55.1 2057,54.4 2063,50.1 2069,45 2075,39.8" fill="none" stroke="#ff0000" stroke-width="1" stroke-linejoin="round"/>
<path d="M1091.5 182.1V209.6M1097.5 178.9V208M1109.5 157.8V189.2M1133.5 175.6V190.8M1139.5 169.2V188.6M1145.5 169.2V177.9M1151.5 170.6V176.6M1157.5 171.4V177.5M1175.5 161.6V179.1M1181.5 99.6V172.4M1205.5 111.9V119.6M1217.5 136.1V156.2M1223.5 120.7V144.9M1229.5 106.1V130.3M1235.5 106.1V121.3M1247.5 67.2V88.9M1265.5 74.8V85.3M1277.5 73.3V93.2M1283.5 76V87.3M1295.5 83.1V93.4M1301.5 85.9V98.2M1313.5 68.5V87.9M1319.5 71.5V84.6M1331.5 77.7V86.5M1343.5 76.3V92.4M1361.5 73.6V95.2M1373.5 77.4V91.1M1379.5 69.4V86.1M1397.5 91.6V96M1403.5 79.8V94.4M1409.5 78.5V88.4M1415.5 74.4V86.4M1421.5 105.4V132.6M1439.5 120V132.9M1451.5 142.6V170.8M1481.5 161.7V176M1487.5 161.4V176M1493.5 155.4V164.5M1499.5 156.7V168.9M1511.5 157.2V171.4M1517.5 145.5V163.2M1529.5 130.4V153M1535.5 113.1V135.2M1541.5 106.4V117.6M1547.5 96V118.7M1553.5 94.2V107.2M1559.5 92V103.8M1565.5 73.7V100.2M1613.5 130.9V140.4M1619.5 129.9V137.1M1625.5 122.1V133.6M1631.5 125.4V130.2M1661.5 137.3V154.3M1685.5 139.9V151.4M1691.5 143.4V155.7M1697.5 127.5V145.9M1703.5 128.7V143.3M1715.5 132.4V140.6M1721.5 125.4V138M1739.5 123.1V140.5M1763.5 137.2V157.9M1769.5 120.8V151.7M1775.5 111.9V127.2M1793.5 116V136.7M1799.5 119.8V132.7M1805.5 124.2V128.5M1811.5 116.1V130.3M1817.5 124.3V135.5M1829.5 111.9V133.6M1847.5 150.9V165.4M1853.5 137.2V157.2M1859.5 139.5V144.9M1865.5 124.2V148.2M1871.5 118.3V139.6M1877.5 87V123.3M1889.5 79.6V94.1M1895.5 67V83.5M1901.5 65.4V81.9M1961.5 54.7V67.3M1973.5 46.4V56.3M1985.5 46.7V53.5M1991.5 41.4V52.3M1997.5 34.8V45.9M2009.5 41V54.3M2045.5 53.2V63.6M2057.5 41.7V68.3M2063.5 22.9V43" stroke="#ff0000" fill="none"/>
<path d="M1090 183.7h3v14.6h-3zM1096 180.5h3v11.3h-3zM1108 172.4h3v16.2h-3zM1132 177.2h3v12.9h-3zM1138 172.4h3v9.7h-3zM1144 172.4h3v4.9h-3zM1150 172.4h3v2h-3zM1156 172.4h3v3.3h-3zM1174 162.6h3v7h-3zM1180 112.5h3v58.3h-3zM1204 112.5h3v6.5h-3zM1216 136.8h3v8.1h-3zM1222 129.4h3v11.9h-3zM1228 110.9h3v16.2h-3zM1234 107.7h3v12.9h-3zM1246 78.5h3v9.7h-3zM1264 81.4h3v2.8h-3zM1276 80.8h3v2.9h-3zM1282 81.8h3v2.4h-3zM1294 87.6h3v2.5h-3zM1300 87.6h3v4.1h-3zM1312 74.7h3v11h-3zM1318 74.7h3v3.6h-3zM1330 81.4h3v3.5h-3zM1342 81.1h3v5.4h-3zM1360 80.9h3v5.4h-3zM1372 81.5h3v4.7h-3zM1378 75.8h3v5.7h-3zM1396 93.1h3v1.9h-3zM1402 81.1h3v12h-3zM1408 80.8h3v3.3h-3zM1414 82.7h3v2.7h-3zM1420 106.1h3v25.9h-3zM1438 122.6h3v3.4h-3zM1450 143.3h3v21h-3zM1480 163.3h3v3h-3zM1486 163.3h3v3h-3zM1492 158.5h3v4.9h-3zM1498 158.5h3v4h-3zM1510 157.8h3v12.9h-3zM1516 147.2h3v11.7h-3zM1528 132.3h3v17.1h-3zM1534 116.6h3v15.7h-3zM1540 110.6h3v6h-3zM1546 104.6h3v6h-3zM1552 100.7h3v3.9h-3zM1558 96.6h3v4.1h-3zM1564 80.2h3v19.4h-3zM1612 132.3h3v3.3h-3zM1618 131.1h3v4.3h-3zM1624 126.4h3v4.6h-3zM1630 126.4h3v2.6h-3zM1660 145.7h3v4.8h-3zM1684 144.9h3v5.4h-3zM1690 144.9h3v2.9h-3zM1696 134.2h3v10.7h-3zM1702 129.9h3v4.3h-3zM1714 133.6h3v2.6h-3zM1720 127.4h3v6.2h-3zM1738 127h3v7.6h-3zM1762 137.8h3v19.4h-3zM1768 123.2h3v20.5h-3zM1774 113.6h3v12.9h-3zM1792 125.1h3v10.5h-3zM1798 124.9h3v2h-3zM1804 125.2h3v1.7h-3zM1810 125.6h3v2.4h-3zM1816 126h3v3.7h-3zM1828 126.5h3v6.5h-3zM1846 151.9h3v5.2h-3zM1852 137.8h3v14.6h-3zM1858 140.6h3v2.7h-3zM1864 124.9h3v22.7h-3zM1870 121.6h3v15.5h-3zM1876 87.7h3v34h-3zM1888 87.7h3v4.9h-3zM1894 67.6h3v15.2h-3zM1900 68.2h3v6.5h-3zM1960 55.3h3v11.3h-3zM1972 50.2h3v5.1h-3zM1984 48.2h3v2.6h-3zM1990 42.4h3v5.8h-3zM1996 35.9h3v6.5h-3zM2008 42.9h3v2.9h-3zM2044 55.3h3v2.2h-3zM2056 42.4h3v19.4h-3zM2062 29.4h3v12.9h-3z" fill="#ff0000"/>
<path d="M1103.5 182.1V201.5M1115.5 162.7V195M1121.5 169.2V203.1M1127.5 187.9V203.1M1163.5 163.5V173.1M1169.5 163.5V171.5M1187.5 98.9V113.2M1193.5 86.6V113.2M1199.5 111.9V121.3M1211.5 110.9V142.3M1241.5 100.5V108.7M1253.5 69.4V82M1259.5 75.9V87.2M1271.5 70.5V82.6M1289.5 80.6V89.2M1307.5 75.6V92.1M1325.5 65.6V85.2M1337.5 74.4V91.2M1349.5 69.9V88.6M1355.5 71.6V89.7M1367.5 75.2V91.9M1385.5 74.6V83.2M1391.5 75.3V96.1M1427.5 102.8V113.3M1433.5 105.4V127.7M1445.5 116.7V165M1457.5 142.6V153.6M1463.5 142.6V165M1469.5 158.2V164.7M1475.5 156.8V172.6M1505.5 157.2V171.4M1523.5 143.3V155.4M1571.5 73.6V88.1M1577.5 84.3V114.2M1583.5 111.3V131.3M1589.5 126.2V137.1M1595.5 131.8V138.3M1601.5 128.2V137.8M1607.5 124V141M1637.5 123V131.8M1643.5 126.6V139.9M1649.5 134V152.9M1655.5 138.6V151.7M1667.5 137.4V146.5M1673.5 142.4V147.6M1679.5 144.8V155.9M1709.5 128.8V143.1M1727.5 125.3V137.1M1733.5 127.2V142.1M1745.5 126V133.6M1751.5 129.2V154.5M1757.5 151.7V189.6M1781.5 117.3V124.5M1787.5 111.9V145.9M1823.5 133V197.1M1835.5 105.5V165.3M1841.5 151.7V176.7M1883.5 74.7V92.5M1907.5 22.3V43M1913.5 35.2V48.8M1919.5 35.2V43M1925.5 41.3V53.5M1931.5 29.4V50.5M1937.5 48.2V60.8M1943.5 54.7V68.3M1949.5 51V67.2M1955.5 59.5V74.7M1967.5 48.5V57M1979.5 42.1V56.2M2003.5 33.1V50M2015.5 40.2V54M2021.5 37.6V53M2027.5 29.4V61.8M2033.5 45.5V57.4M2039.5 51.8V57M2051.5 55.3V74.7M2069.5 22.9V35.9M2075.5 23.4V34.6" stroke="#0000ff" fill="none"/>
<path d="M1102 182.1h3v8.1h-3zM1114 172.4h3v8.1h-3zM1120 180.5h3v3.2h-3zM1126 188.6h3v1.6h-3zM1162 168.6h3v2.4h-3zM1168 166.6h3v2.9h-3zM1186 99.6h3v12.9h-3zM1192 106.1h3v6.5h-3zM1198 112.5h3v8.1h-3zM1210 119h3v22.7h-3zM1240 104h3v2.2h-3zM1252 78h3v3h-3zM1258 77h3v4.3h-3zM1270 77.9h3v2.9h-3zM1288 81.8h3v5h-3zM1306 82.1h3v3.6h-3zM1324 74.7h3v5.7h-3zM1336 81.4h3v5h-3zM1348 77.2h3v3.6h-3zM1354 80.8h3v5.5h-3zM1366 80.9h3v5.3h-3zM1384 75.8h3v4.7h-3zM1390 80.5h3v11.1h-3zM1426 103.8h3v5.1h-3zM1432 106.1h3v21h-3zM1444 117.4h3v46.9h-3zM1456 143.3h3v9.7h-3zM1462 143.3h3v21h-3zM1468 160.9h3v2.4h-3zM1474 159.1h3v4.2h-3zM1504 157.8h3v12.9h-3zM1522 147.5h3v1.9h-3zM1570 80.8h3v6.2h-3zM1576 87h3v25.5h-3zM1582 112.5h3v15.7h-3zM1588 128.2h3v7.7h-3zM1594 132.8h3v4h-3zM1600 133.1h3v3.7h-3zM1606 134h3v1.6h-3zM1636 124.1h3v3.7h-3zM1642 127.8h3v9.4h-3zM1648 137.2h3v6.8h-3zM1654 143.9h3v6.6h-3zM1666 141.1h3v3.8h-3zM1672 143.5h3v2.6h-3zM1678 146.1h3v4.2h-3zM1708 129.9h3v3.6h-3zM1726 126.4h3v3.4h-3zM1732 129.9h3v4.7h-3zM1744 127h3v5.3h-3zM1750 132.3h3v16h-3zM1756 152.4h3v4.9h-3zM1780 120.4h3v3.2h-3zM1786 120h3v17.8h-3zM1822 137.8h3v1.6h-3zM1834 124.9h3v32.4h-3zM1840 152.4h3v3.2h-3zM1882 86.1h3v4.9h-3zM1906 22.9h3v19.4h-3zM1912 35.9h3v6.5h-3zM1918 35.9h3v6.5h-3zM1924 42.4h3v5.7h-3zM1930 42.4h3v3.2h-3zM1936 48.8h3v11.3h-3zM1942 55.3h3v6.5h-3zM1948 58h3v4.4h-3zM1954 60.2h3v8.1h-3zM1966 53.6h3v1.7h-3zM1978 44.2h3v4.3h-3zM2002 35.9h3v5.2h-3zM2014 42.9h3v4.8h-3zM2020 47h3v1.8h-3zM2026 45.6h3v4.9h-3zM2032 49.5h3v4.8h-3zM2038 53.2h3v2.1h-3zM2050 58.5h3v3.2h-3zM2068 29.4h3v3.2h-3zM2074 25.3h3v4.1h-3z" fill="#0000ff"/>
<polyline points="1085.8,172.4 1091.3,176.3 1173.9,176.3 1180.3,165.9 1183.6,154.6 1191.7,148.1 1238.6,148.1 1248.3,135.2 1277.4,135.2 1287.1,127.1 1293.6,122.2 1327.6,122.2 1337.3,109.3 1371.3,108.6 1390.7,88.3 1398.8,90.5 1415,90.5 1423,104.4 1439.2,104.4 1447.3,118 1578.4,119 1580,121.7 1664.1,121.7 1672.2,116.1 1715.9,116.1 1722.4,121.7 1728.9,131.4 1748.3,133 1756.4,147.5 1819.5,148.2 1824.3,151.4 1869.6,151.4 1879.4,137.8 1900.4,131.4 1906.9,110.3 1971.6,109.7 1981.3,99 1991,98 1997.5,90.3 2007.2,87 2016.9,86.1 2028.2,73.1 2033.1,58.5 2042.8,56.9 2052.5,48.8 2073.5,48.2" fill="none" stroke="#0000ff" stroke-width="3" stroke-linejoin="round"/>
<polyline points="1085.8,170.8 1091.3,172.4 1096.2,175.6 1164.1,176.3 1170.6,182.1 1177.1,177.2 1180.3,169.2 1183.6,144.9 1188.4,143.3 1193.3,132.9 1222.4,132.9 1228.9,127.1 1241.8,120.6 1248.3,109.3 1264.5,109.3 1274.2,103.8 1287.1,88.3 1296.2,81.8 1306.5,83.4 1332.4,83.4 1338.9,80.2 1390.7,80.8 1398.8,89.9 1413.3,89.9 1419.8,104.4 1442.5,105.1 1448.9,119 1458.6,122.2 1468.3,133.6 1487.8,135.2 1497.5,144.9 1500.7,156.2 1518.5,157.8 1528.2,151.4 1536.3,141.7 1546,135.2 1559,130.3 1571.9,115.8 1578.4,114.1 1580,107.1 1586.5,107.1 1591.3,116.8 1612.4,116.8 1622.1,134.6 1631.8,136.2 1644.7,128.1 1664.1,128.1 1670.6,137.8 1686.8,141.1 1696.5,144.3 1709.4,139.4 1719.2,136.2 1728.9,131.4 1745,131.4 1751.5,137.8 1761.2,137.8 1767.7,149.2 1806.5,150.8 1814.6,133 1819.5,149.2 1826,154 1835.7,154 1855.1,149.2 1864.8,150.8 1871.3,150.8 1876.1,136.2 1885.8,129.7 1893.9,113.6 1900.4,110.3 1906.9,87.7 1913.3,86.1 1923,73.1 1929.5,69.9 1939.2,56.9 1948.9,45.6 1955.4,47.2 1961.9,52.1 1981.3,52.1 1987.8,56.9 2007.2,52.1 2013.7,44 2046,45.6 2055.7,50.5 2073.5,47.2" fill="none" stroke="#ff0000" stroke-width="3" stroke-linejoin="round"/>
<polyline points="1085.8,106.1 1091.3,104.4 1096.2,81.8 1104.3,80.8 1112.4,81.8 1118.8,80.8 1131.8,80.8 1139.9,87.6 1156.1,87.6 1162.5,74.7 1169,74.7 1175.5,80.8 1180.3,80.8 1186.8,86.6 1193.3,80.8 1199.1,80.8 1204.6,86.6 1211.1,80.8 1217.5,86.6 1229.5,75.3 1235.3,80.8 1241.8,93.1 1247.6,93.1 1253.1,80.8 1264.5,80.8 1270.9,103.8 1277.4,109.3 1283.9,123.9 1290.4,122.2 1296.2,162.7 1301.7,144.9 1308.2,144.9 1313.7,162.7 1319.5,163.3 1337.3,163.3 1343.8,157.8 1348.6,157.8 1355.7,169.2 1367.4,146.5 1372.9,149.7 1384.2,117.4 1390.7,110.9 1398.8,102.8 1408.5,98 1415,80.8 1419.8,80.8 1424.7,106.1 1431.1,123.9 1436,135.2 1442.5,136.8 1455.4,136.8 1461.9,131.9 1466.7,133.6 1473.2,126.4 1486.1,126.4 1492.6,136.8 1497.5,141.7 1503.9,151.4 1512,144.9 1521.7,144.9 1528.2,151.4 1533.1,144.9 1541.2,144.9 1550.9,127.1 1555.7,133.6 1568.7,133.6 1573.5,120.6 1578.4,133.6 1580,134.6 1586.5,134.6 1591.3,120 1596.2,136.2 1602.7,152.4 1607.5,155.6 1612.4,145.9 1618.8,123.3 1623.7,120 1630.2,121.7 1636.6,136.2 1643.1,124.9 1649.6,124.9 1673.9,126.5 1677.1,134.6 1685.2,155.6 1691.7,157.2 1699.7,149.2 1704.6,139.4 1711.1,141.1 1717.5,134.6 1721.4,120 1724,94.1 1728.2,87 1733.7,87 1751.5,67.6 1757.3,42.4 1769.3,42.4 1775.8,48.8 1782.3,48.8 1788.7,60.8 1796.8,60.8 1804.9,66.6 1811.4,55.3 1817.9,55.3 1824.3,48.8 1835.7,48.2 1847,35.9 1854.4,42.4 1858.3,42.4 1866.4,48.8 1876.1,48.8 1884.2,55.3 1895.5,55.3 1901,60.8 1908.5,42.4 1915,29.4 1924.7,29.4" fill="none" stroke="#008000" stroke-width="3" stroke-linejoin="round"/>
<path d="M1090 248h3v52h-3zM1096 283h3v17h-3zM1102 266h3v34h-3zM1108 296h3v4h-3zM1114 291h3v9h-3zM1120 297h3v3h-3zM1126 298h3v2h-3zM1132 294h3v6h-3zM1174 296h3v4h-3zM1180 291h3v9h-3zM1186 283h3v17h-3zM1192 277h3v23h-3zM1198 280h3v20h-3zM1204 298h3v2h-3zM1210 292h3v8h-3zM1216 298h3v2h-3zM1222 298h3v2h-3zM1228 296h3v4h-3zM1234 297h3v3h-3zM1240 298h3v2h-3zM1246 295h3v5h-3zM1252 299h3v1h-3zM1258 295h3v5h-3zM1270 296h3v4h-3zM1276 297h3v3h-3zM1288 299h3v1h-3zM1342 299h3v1h-3zM1354 299h3v1h-3zM1390 296h3v4h-3zM1396 298h3v2h-3zM1402 298h3v2h-3zM1408 299h3v1h-3zM1420 272h3v28h-3zM1426 293h3v7h-3zM1432 281h3v19h-3zM1438 288h3v12h-3zM1444 283h3v17h-3zM1450 285h3v15h-3zM1456 298h3v2h-3zM1462 289h3v11h-3zM1474 299h3v1h-3zM1504 296h3v4h-3zM1510 298h3v2h-3zM1516 298h3v2h-3zM1522 278h3v22h-3zM1528 292h3v8h-3zM1534 297h3v3h-3zM1540 296h3v4h-3zM1546 297h3v3h-3zM1552 298h3v2h-3zM1558 277h3v23h-3zM1564 291h3v9h-3zM1570 299h3v1h-3zM1576 293h3v7h-3zM1582 297h3v3h-3zM1588 298h3v2h-3zM1594 298h3v2h-3zM1600 296h3v4h-3zM1606 299h3v1h-3zM1612 299h3v1h-3zM1618 299h3v1h-3zM1630 299h3v1h-3zM1648 299h3v1h-3zM1654 299h3v1h-3zM1660 299h3v1h-3zM1684 299h3v1h-3zM1702 299h3v1h-3zM1708 299h3v1h-3zM1714 299h3v1h-3zM1720 298h3v2h-3zM1726 297h3v3h-3zM1732 299h3v1h-3zM1738 299h3v1h-3zM1750 261h3v39h-3zM1756 261h3v39h-3zM1762 277h3v23h-3zM1768 285h3v15h-3zM1774 278h3v22h-3zM1780 287h3v13h-3zM1786 282h3v18h-3zM1792 270h3v30h-3zM1798 296h3v4h-3zM1804 286h3v14h-3zM1822 245h3v55h-3zM1828 287h3v13h-3zM1834 278h3v22h-3zM1840 282h3v18h-3zM1846 299h3v1h-3zM1852 288h3v12h-3zM1858 289h3v11h-3zM1864 256h3v44h-3zM1870 288h3v12h-3zM1876 240h3v60h-3zM1882 272h3v28h-3zM1888 271h3v29h-3zM1894 246h3v54h-3zM1900 295h3v5h-3zM1906 277h3v23h-3zM1912 293h3v7h-3zM1918 293h3v7h-3zM1924 292h3v8h-3zM1930 289h3v11h-3zM1936 295h3v5h-3zM1942 292h3v8h-3zM1948 297h3v3h-3zM1954 295h3v5h-3zM1960 292h3v8h-3zM1966 296h3v4h-3zM1972 297h3v3h-3zM1984 298h3v2h-3zM1990 299h3v1h-3zM1996 298h3v2h-3zM2002 298h3v2h-3zM2020 297h3v3h-3zM2026 286h3v14h-3zM2032 295h3v5h-3zM2038 295h3v5h-3zM2044 296h3v4h-3zM2050 291h3v9h-3zM2056 295h3v5h-3zM2062 289h3v11h-3zM2068 298h3v2h-3zM2074 298h3v2h-3z" fill="#008000"/>
<path d="M1085 366.5H2081" stroke="#808080" fill="none"/>
<polyline points="1085,362.5 1105,370 1125,375.5 1155,385 1192.5,391.2 1235,393.8 1280,388.8 1330,381.2 1380,371.2 1417.5,363.8 1442.5,360.5 1505,358.8 1542.5,353.8 1580,348.8 1630,346.2 1630,345.8 1667.5,347.5 1705,351.2 1755,356.2 1805,361.2 1842.5,367 1867.5,368.8 1892.5,366.2 1917.5,360 1955,352.5 2005,343.8 2042.5,337.5 2073.8,333" fill="none" stroke="#ffc0cb" stroke-width="1" stroke-linejoin="round"/>
<path d="M1091 366h1v1h-1zM1121 366h1v1h-1zM1133 366h1v1h-1zM1139 366h1v1h-1zM1145 366h1v1h-1zM1151 366h1v1h-1zM1295 366h1v1h-1zM1511 366h1v1h-1zM1517 366h1v1h-1zM1601 366h1v1h-1zM1607 366h1v1h-1zM1613 366h1v1h-1zM1619 366h1v1h-1zM1625 366h1v1h-1zM1631 366h1v1h-1zM1637 366h1v1h-1zM1643 366h1v1h-1zM1649 366h1v1h-1zM1697 366h1v1h-1zM1703 366h1v1h-1zM1709 366h1v1h-1zM1715 366h1v1h-1zM1721 366h1v1h-1zM1739 366h1v1h-1zM1745 366h1v1h-1zM1751 366h1v1h-1zM1757 366h1v1h-1zM1769 366h1v1h-1zM1775 366h1v1h-1zM1793 366h1v1h-1zM1799 366h1v1h-1zM1805 366h1v1h-1zM1811 366h1v1h-1zM1817 366h1v1h-1zM1823 366h1v1h-1zM1829 366h1v1h-1zM1835 366h1v1h-1zM1949 366h1v1h-1zM1955 366h1v1h-1zM1961 366h1v1h-1zM1967 366h1v1h-1zM1973 366h1v1h-1zM1991 366h1v1h-1zM1997 366h1v1h-1zM2003 366h1v1h-1zM2009 366h1v1h-1zM2015 366h1v1h-1zM2021 366h1v1h-1zM2069 366h1v1h-1zM2075 366h1v1h-1z" fill="#ff0000"/>
<path d="M1097.5 366V368.6M1103.5 366V369.4M1109.5 366V369.2M1115.5 366V368.4M1127.5 366V368.3M1157.5 364.7V367M1163.5 364.6V367M1169.5 363.1V367M1175.5 361.5V367M1181.5 359.9V367M1187.5 357.9V367M1193.5 357.3V367M1199.5 357.6V367M1205.5 356.4V367M1211.5 359.3V367M1217.5 362.1V367M1223.5 363V367M1229.5 362.4V367M1235.5 361.7V367M1241.5 360.9V367M1247.5 360.1V367M1253.5 359.5V367M1259.5 360V367M1265.5 360.3V367M1271.5 360.6V367M1277.5 362.2V367M1283.5 363.3V367M1289.5 364.3V367M1301.5 366V369M1307.5 366V369.9M1313.5 366V369.8M1319.5 366V369.7M1325.5 366V369.6M1331.5 366V369.5M1337.5 366V369.7M1343.5 366V369.9M1349.5 366V370.1M1355.5 366V370.2M1361.5 366V370M1367.5 366V369.8M1373.5 366V369.6M1379.5 366V369.4M1385.5 366V369.8M1391.5 366V370.4M1397.5 366V371.2M1403.5 366V370.8M1409.5 366V370.3M1415.5 366V369.9M1421.5 366V371.1M1427.5 366V372.1M1433.5 366V374.3M1439.5 366V377.2M1445.5 366V378.8M1451.5 366V380.1M1457.5 366V381.4M1463.5 366V381.2M1469.5 366V379.8M1475.5 366V378.6M1481.5 366V377.3M1487.5 366V376M1493.5 366V373.3M1499.5 366V371.8M1505.5 366V370.3M1523.5 364.5V367M1529.5 362.5V367M1535.5 360.6V367M1541.5 358.8V367M1547.5 357V367M1553.5 355.3V367M1559.5 354.4V367M1565.5 353.9V367M1571.5 354V367M1577.5 356.9V367M1583.5 360.5V367M1589.5 363.4V367M1595.5 364.7V367M1655.5 366V368.3M1661.5 366V368.7M1667.5 366V369.1M1673.5 366V369M1679.5 366V368.8M1685.5 366V369M1691.5 366V369M1727.5 364.6V367M1733.5 364.7V367M1763.5 366V369.4M1781.5 363.6V367M1787.5 364.6V367M1841.5 366V369M1847.5 366V369.8M1853.5 366V369.1M1859.5 366V368.4M1865.5 364.8V367M1871.5 362.7V367M1877.5 360.5V367M1883.5 359V367M1889.5 358.2V367M1895.5 357.1V367M1901.5 355.6V367M1907.5 354.4V367M1913.5 353.1V367M1919.5 352.8V367M1925.5 354.8V367M1931.5 356.9V367M1937.5 359.6V367M1943.5 362.3V367M1979.5 366V368.3M1985.5 366V368.2M2027.5 366V369.2M2033.5 366V370.5M2039.5 366V371.4M2045.5 366V371.9M2051.5 366V371.6M2057.5 366V369.9M2063.5 366V368.7" stroke="#ff0000" fill="none"/>
<polyline points="1085,370 1105,374.5 1130,373.8 1162.5,368.8 1180,361.2 1190,352.5 1205,346.2 1220,350 1240,345 1255,338.8 1270,336.2 1287.5,337.5 1305,342.5 1330,343.8 1355,348.8 1380,352.5 1397.5,357.5 1415,358.8 1430,365 1442.5,375 1460,387.5 1475,391.2 1487.5,393.2 1505,391.2 1520,387.5 1537.5,377.5 1555,365 1570,355 1580,357.5 1590,362.5 1610,366.2 1642.5,367.5 1667.5,372.5 1692.5,375 1705,371.2 1730,367 1750,366.2 1762.5,369.5 1780,364.5 1800,367 1830,365 1845,370.5 1860,370.5 1875,362.5 1892.5,352.5 1905,343.8 1917.5,335 1930,333 1942.5,336.2 1955,340 1980,342 2005,342.5 2025,346.2 2042.5,352.5 2052.5,355 2067.5,352.5 2073.8,352.5" fill="none" stroke="#ffff00" stroke-width="1" stroke-linejoin="round"/>
<polyline points="1085,370 1117.5,373 1155,371.2 1180,367 1197.5,357.5 1217.5,353 1242.5,349.5 1260,343.8 1280,340 1300,339.2 1330,341.2 1355,345.5 1392.5,352.5 1417.5,356.2 1437.5,361.2 1455,370 1472.5,378.8 1492.5,386.2 1515,389.2 1537.5,383.8 1555,376.2 1570,367.5 1582.5,364.5 1605,365 1642.5,367 1680,372 1692.5,373 1717.5,370 1742.5,367 1780,367 1830,365.8 1850,368 1862.5,369.5 1880,366.2 1900,357.5 1915,350 1930,342.5 1947.5,339.2 1967.5,340 1992.5,341.2 2010,343.8 2030,345 2042.5,347.5 2055,351.2 2073.8,352" fill="none" stroke="#0000ff" stroke-width="1" stroke-linejoin="round"/>
<path d="M1085 438.5H2076" stroke="#0000ff" fill="none"/>
<path d="M1085 477.5H2076" stroke="#ff0000" fill="none"/>
<polyline points="1085,464.2 1102.5,467 1117.5,463.8 1132.5,468 1142.5,462.5 1155,451.2 1165,448.8 1177.5,446.2 1190,439.5 1205,441.2 1215,448.8 1227.5,453.8 1240,447.5 1255,437.5 1270,435.5 1287.5,436.2 1307.5,441.2 1320,439.5 1332.5,445 1340,453.8 1355,460 1370,464.5 1385,457.5 1402.5,461.2 1417.5,450 1427.5,451.2 1440,462.5 1452.5,476.2 1465,480 1480,485 1500,483.8 1515,482.5 1525,476.2 1535,457.5 1545,443.8 1555,436.2 1570,432 1580,440 1592.5,457.5 1607.5,470 1620,472.5 1637.5,467 1647.5,469.5 1658.8,475 1675,470.8 1687.5,471.8 1697.5,467.5 1710,451.2 1720,446.2 1732.5,451.2 1745,455 1762.5,462.5 1770,457.5 1782.5,443 1797.5,446.8 1810,444.5 1830,441.2 1837.5,445 1847.5,453.8 1860,453.8 1870,447.5 1885,433.8 1902.5,429.5 1915,431.2 1930,435 1947.5,441.2 1967.5,452.5 1985,455 1995,451.2 2007.5,443.8 2020,445 2030,448.8 2042.5,461.2 2052.5,467.5 2057.5,466.2 2067.5,448.8 2073.8,441.2" fill="none" stroke="#ff0000" stroke-width="1" stroke-linejoin="round"/>
<polyline points="1085,465 1092.5,468 1097.5,466.2 1103,468 1109.5,460.5 1115,465 1126.2,468.8 1132.5,467.5 1145,453.8 1155,448.8 1165,448 1175,447 1181.2,440 1187.5,437.5 1200,441.2 1205,440 1211.2,451.2 1223,456.2 1235,445 1242.5,441.2 1252.5,435.5 1270,435 1287.5,437 1306.2,443 1317.5,437.5 1325,447 1331.2,447 1337.5,457.5 1350,458.8 1355,465.8 1361.2,462.5 1367.5,467.5 1378.8,452.5 1385,455 1391.2,465.8 1397.5,463.8 1403.8,453.8 1415,446.2 1421.2,453.8 1427.5,457.5 1432.5,467.5 1438.8,470 1445,480 1455,475.8 1462.5,481.2 1475,484.5 1485,485 1497.5,481.2 1505,483.8 1512.5,480 1517.5,472.5 1523.8,469.5 1528.8,456.2 1535,443 1545,437.5 1552.5,433 1570,430.5 1577.5,446.2 1590,460 1600,468.8 1607.5,473 1617.5,471.2 1630,466.2 1640,467 1647.5,472.5 1655.5,478 1662.5,472.5 1677.5,469.5 1685,474.2 1691.2,471.2 1702.5,447.5 1715,447 1721.2,444.5 1727.5,455 1733.8,452 1740,455 1745,452.5 1751.2,464.2 1757.5,464.2 1775,442.5 1781.2,439.2 1787.5,445 1795,447.5 1805,445 1820,441.2 1827.5,438.8 1835,450 1841.2,456.2 1846.2,457.5 1852.5,453.8 1858.8,453.2 1865,446.2 1877.5,433 1883.8,433 1890,431.2 1901.2,428.8 1907.5,432 1930,436.2 1937.5,441.2 1946.2,445 1955,451.2 1965,453 1973.8,452.5 1983.8,456.2 1990,450 1996.2,442.5 2005,443.8 2015,445 2025,448.8 2035,458.8 2045,470 2051.2,470 2062.5,446.2 2073.8,437" fill="none" stroke="#0000ff" stroke-width="1" stroke-linejoin="round"/>
<path d="M2161.5 36.6V54.4M2167.5 36.6V60.3M2173.5 36.6V68.1M2179.5 36.6V75.9M2185.5 45.8V84.4M2191.5 47.9V93.7M2197.5 47.9V103M2203.5 47.9V103.2M2209.5 47.9V103.5M2215.5 47.9V103.8M2221.5 47.9V107.7M2227.5 47.9V115.1M2233.5 65.3V131.1M2239.5 69V148.3M2245.5 69V148.3M2251.5 69V148.3M2257.5 69V148.3M2263.5 69V148.3M2269.5 69V148.3M2275.5 69V148.3M2281.5 69V148.5M2287.5 69V149.2M2293.5 69V150M2299.5 69V150.7M2305.5 69V151.5M2311.5 81.7V158.6M2317.5 93.9V160.2M2323.5 101.9V161M2329.5 103.9V167.3M2335.5 103.9V175.8M2341.5 103.9V178.8M2347.5 103.9V180.5M2353.5 111.8V180.6M2359.5 117.6V180.6M2365.5 117.8V180.6M2371.5 118V180.9M2377.5 118.3V182.4M2383.5 118.5V183.9M2389.5 118.5V165.9M2395.5 118.5V161.7M2401.5 118.5V158.7M2407.5 118.5V155.7M2413.5 118.5V152.7M2419.5 118.5V149.5M2425.5 118.5V143.5M2431.5 118.5V139M2437.5 118.5V136.4M2443.5 119.9V133.8M2449.5 124.7V131.1M2689.5 130.5V133.8M2695.5 134.3V140.6M2701.5 136V148.3M2707.5 136V148.3M2713.5 136V148.3" stroke="#0000ff" fill="none"/>
<path d="M2461.5 125.2V129.4M2467.5 122V129.9M2473.5 118.8V130.4M2479.5 118.3V132.9M2485.5 118.1V135.6M2491.5 117.8V138.3M2497.5 117.6V141M2503.5 118.2V143.7M2509.5 119.3V145.2M2515.5 120.4V145.5M2521.5 121.6V145.8M2527.5 122.9V146.1M2533.5 124.9V146.4M2539.5 126.9V146.7M2545.5 128.9V146.7M2551.5 130.9V146.7M2557.5 131.9V146.7M2563.5 131.4V146.7M2569.5 131V146.7M2575.5 130.5V146.7M2581.5 130.1V146.7M2587.5 129.6V146.7M2593.5 129.1V146.7M2599.5 128.9V146.7M2605.5 128.9V146.7M2611.5 128.6V146.7M2617.5 127.6V146.7M2623.5 126.6V146.7M2629.5 125.6V146.7M2635.5 126.1V146.7M2641.5 126.6V146.7M2647.5 127.1V146.7M2653.5 131.3V146.7M2659.5 136.5V140.4" stroke="#ff0000" fill="none"/>
<polyline points="2155.8,49.6 2166.2,59.3 2182.4,80.3 2196.9,103 2218,103.9 2227.7,115.9 2239,148.3 2279.4,148.3 2305.3,151.5 2311.8,159.6 2324.8,161.2 2336.1,177.4 2347.4,180.6 2370.1,180.6 2383,183.9 2389.5,164.4 2418.6,149.9 2428.3,140.2 2454.2,128.9 2473.6,118.5 2499.5,117.5 2525.4,122.4 2554.5,132.1 2596.6,128.9 2609.5,128.9 2629,125.6 2648.4,127.2 2661.3,138.6 2671,138.6 2684,132.1 2693.7,135.3 2696.9,148.3 2716.3,148.3" fill="none" stroke="#00ffff" stroke-width="1" stroke-linejoin="round"/>
<polyline points="2155.8,36.6 2182.4,36.6 2185.6,47.9 2227.7,47.9 2234.1,69 2305.3,69 2311.8,83.5 2318.3,96.5 2324.8,103.9 2347.4,103.9 2357.1,117.5 2383,118.5 2441.3,118.5 2454.2,128.9 2473.6,130.5 2506,145 2538.3,146.7 2609.5,146.7 2654.9,146.7 2661.3,136.9 2674.3,138.6 2684,130.5 2690.5,130.5 2696.9,136 2716.3,136" fill="none" stroke="#ff0000" stroke-width="1" stroke-linejoin="round"/>
<polyline points="2486.6,56 2506,64.1 2538.3,75.5 2570.7,85.2 2603.1,91.6 2635.4,95.8 2667.8,98.1 2713.1,103.9" fill="none" stroke="#ffff00" stroke-width="1" stroke-linejoin="round"/>
<polyline points="2155.8,44.7 2182.4,57.7 2214.7,73.8 2247.1,88.4 2279.4,103 2311.8,112.7 2344.2,119.1 2376.5,124 2408.9,130.5 2441.3,136.9 2473.6,136.9 2538.3,138.6 2603.1,132.1 2635.4,124 2667.8,117.5 2713.1,110.1" fill="none" stroke="#800080" stroke-width="1" stroke-linejoin="round"/>
<polyline points="2221,180.8 2227,180.8 2233,180.9 2239,177.2 2245,174.1 2251,171.7 2257,169.2 2263,166.5 2269,163.8 2275,161.4 2281,158 2287,154.8 2293,151.9 2299,149.4 2305,147.2 2311,145 2317,143 2323,141.3 2329,139.5 2335,137.8 2341,136.2 2347,134.7 2353,133.6 2359,132.3 2365,131.1 2371,130.4 2377,130.1 2383,130.7 2389,131.7 2395,132.8 2401,132.6 2407,132.5 2413,132.6 2419,132.3 2425,131 2431,129.3 2437,127 2443,124.7 2449,122.1 2455,120.6 2461,119.6 2467,118.7 2473,117.7 2479,117.8 2485,118.1 2491,118.6 2497,119.2 2503,120 2509,120.8 2515,121.4 2521,122.6 2527,124 2533,125.2 2539,126.2 2545,127.8 2551,129.1 2557,130.1 2563,131.1 2569,132.4 2575,133.9 2581,135.1 2587,136.9 2593,138.3 2599,139.5 2605,139.8 2611,139.3 2617,138.4 2623,136.4 2629,133.4 2635,130.5 2641,128 2647,125.5 2653,123 2659,120.4 2665,118.6 2671,116.9 2677,115.6 2683,114.8 2689,114.1 2695,112.4 2701,110 2707,107.4 2713,104.8" fill="none" stroke="#00ffff" stroke-width="1" stroke-linejoin="round"/>
<polyline points="2209,178.8 2215,180.3 2221,180.8 2227,180.8 2233,180.9 2239,177.2 2245,174.1 2251,171.7 2257,169.2 2263,166.5 2269,163.8 2275,161.4 2281,158 2287,154.8 2293,151.9 2299,149.4 2305,147.2 2311,143.8 2317,140.7 2323,137.9 2329,134.8 2335,131.1 2341,127.3 2347,123.1 2353,119.7 2359,115.6 2365,111.4 2371,108.2 2377,105.7 2383,104.5 2389,106.3 2395,107.9 2401,109.3 2407,110.8 2413,112.6 2419,114.3 2425,114.8 2431,115.8 2437,116.4 2443,116.4 2449,116.3 2455,117.8 2461,120.1 2467,122.3 2473,124.1 2479,126 2485,128.1 2491,130.8 2497,133.4 2503,135.5 2509,137.9 2515,139.8 2521,141.1 2527,142.1 2533,141.5 2539,139.8 2545,139.3 2551,138.2 2557,136.7 2563,135.5 2569,134.8 2575,135.6 2581,136.5 2587,138.8 2593,141.5 2599,143.4 2605,142.1 2611,139.8 2617,137.2 2623,134.5 2629,131.3 2635,127.9 2641,124.3 2647,120.9 2653,117.4 2659,113.7 2665,110.4 2671,106.7 2677,102.9 2683,99.7 2689,97 2695,93.1 2701,89.5 2707,86 2713,82.1" fill="none" stroke="#006400" stroke-width="1" stroke-linejoin="round"/>
<polyline points="2197,176.2 2203,177 2209,178.8 2215,180.3 2221,180.8 2227,180.8 2233,180.9 2239,177.2 2245,174.1 2251,171.7 2257,169.2 2263,166.5 2269,163.8 2275,161.4 2281,157.1 2287,153.1 2293,149.3 2299,145.4 2305,141.2 2311,136.5 2317,131.4 2323,127 2329,121.8 2335,116.5 2341,111.6 2347,107 2353,102.9 2359,100.9 2365,98.8 2371,97.3 2377,96.9 2383,98.4 2389,101.3 2395,104.1 2401,108.1 2407,112 2413,115.9 2419,119.2 2425,120.8 2431,122.2 2437,122.7 2443,122.4 2449,122.4 2455,124.6 2461,127.6 2467,130.4 2473,132.5 2479,134.7 2485,137.4 2491,139.9 2497,141.6 2503,141.6 2509,140.4 2515,138.6 2521,137.1 2527,136 2533,134.5 2539,133.1 2545,134.8 2551,136 2557,137.4 2563,139.7 2569,142.4 2575,143.1 2581,142.6 2587,143.3 2593,144.1 2599,144.2 2605,142.1 2611,138.8 2617,135.2 2623,131.3 2629,126.5 2635,122.5 2641,118.9 2647,115.1 2653,111.4 2659,107.7 2665,102.5 2671,97.8 2677,93.8 2683,89.9 2689,85.9 2695,81.6 2701,77.4 2707,71.5 2713,65.5" fill="none" stroke="#ff6600" stroke-width="1" stroke-linejoin="round"/>
<polyline points="2179,168.9 2185,171.3 2191,173.3 2197,176.2 2203,177 2209,178.8 2215,180.3 2221,181.4 2227,182.5 2233,184.4 2239,180.5 2245,175.6 2251,170.7 2257,164.3 2263,158.1 2269,150.3 2275,142.5 2281,132.9 2287,123.6 2293,114.3 2299,110.4 2305,106.9 2311,102.3 2317,98.5 2323,95.9 2329,93.3 2335,90.5 2341,90.4 2347,90.4 2353,91.4 2359,91.4 2365,90.7 2371,92.3 2377,95.2 2383,100.9 2389,109.3 2395,117.8 2401,125.9 2407,133.6 2413,140.3 2419,147.1 2425,151 2431,152.1 2437,150.2 2443,143.8 2449,135.5 2455,131.5 2461,129.3 2467,127.3 2473,124.7 2479,122.4 2485,123.7 2491,127.8 2497,133 2503,139.3 2509,145.3 2515,145.8 2521,144.9 2527,144.7 2533,144.4 2539,143.9 2545,145.8 2551,144.3 2557,141.9 2563,140.2 2569,139.5 2575,140.5 2581,140.4 2587,141.9 2593,143.9 2599,144.6 2605,138.5 2611,133.2 2617,128.5 2623,122.4 2629,113.5 2635,104.4 2641,97.3 2647,88.2 2653,78.9 2659,70.9 2665,66.5 2671,62.3 2677,59.1 2683,57.3 2689,58.3 2695,58.8 2701,57.5 2707,54.7 2713,52" fill="none" stroke="#00ff00" stroke-width="1" stroke-linejoin="round"/>
<polyline points="2167,172.4 2173,169.3 2179,168.9 2185,171.3 2191,173 2197,177.7 2203,181.6 2209,186.8 2215,189.3 2221,189.7 2227,187.3 2233,187.1 2239,174.2 2245,161.8 2251,151.7 2257,141.3 2263,129.1 2269,126.3 2275,123.2 2281,114.2 2287,106 2293,99.4 2299,94.5 2305,90.6 2311,90.4 2317,91.1 2323,92.3 2329,92 2335,90.5 2341,90.3 2347,89.7 2353,90.6 2359,90.9 2365,90.9 2371,94.3 2377,100.7 2383,111.3 2389,127.8 2395,144.6 2401,157.4 2407,166.5 2413,169.3 2419,166.3 2425,157.4 2431,146.7 2437,133.8 2443,118.3 2449,104.7 2455,105.6 2461,111.8 2467,120.7 2473,131.1 2479,140.1 2485,141.8 2491,143.8 2497,145.2 2503,147.5 2509,150.4 2515,149.7 2521,146 2527,144.2 2533,141.2 2539,137.3 2545,141.9 2551,142.6 2557,139.6 2563,139.1 2569,141.7 2575,139.2 2581,138.2 2587,144.3 2593,148.6 2599,147.4 2605,137.8 2611,128.3 2617,112.6 2623,96.3 2629,79.5 2635,70.9 2641,66.4 2647,63.8 2653,61.5 2659,62.3 2665,62.1 2671,58.2 2677,54.4 2683,53 2689,54.2 2695,55.5 2701,56.7 2707,55 2713,51.1" fill="none" stroke="#ff0000" stroke-width="1" stroke-linejoin="round"/>
<path d="M2161.5 164.4V190.3M2167.5 162.2V174.8M2173.5 153.1V174.2M2197.5 183.9V217.8M2203.5 167.7V191M2215.5 183.9V209.8M2221.5 174.2V200M2233.5 181.6V189.4M2239.5 107.8V174.8M2257.5 126.6V156.4M2263.5 112.7V142.4M2269.5 104.6V125.6M2275.5 114.6V117.2M2281.5 72.2V115.9M2305.5 88.4V99.7M2311.5 81.9V97.1M2317.5 87.1V89.7M2329.5 75.5V96.5M2335.5 85.7V94.8M2341.5 77.4V103.4M2359.5 75.5V107.8M2371.5 110.4V139.2M2413.5 164.4V179M2419.5 146.7V173.2M2425.5 126.6V152.2M2431.5 107.8V128.9M2437.5 102.3V119.8M2443.5 81.9V108.5M2473.5 137.9V147.3M2479.5 131.4V140.8M2497.5 149.2V166.1M2515.5 133.1V160.2M2533.5 137.3V139.9M2539.5 118.8V146.6M2551.5 133.1V166.7M2557.5 119.1V136M2563.5 119.1V145M2569.5 141.1V147.3M2575.5 137.9V144.1M2581.5 119.1V204.9M2593.5 153V161.8M2599.5 127.1V159.2M2605.5 94.2V136M2611.5 80.3V101.3M2617.5 75.5V94.9M2623.5 74.2V76.7M2653.5 56V69.6M2659.5 55.4V64.8M2665.5 56V64.1M2671.5 42.4V58.3M2683.5 47.9V57.7M2701.5 49.6V81.9M2707.5 37.6V50.2M2713.5 25.3V43.3" stroke="#ff0000" fill="none"/>
<path d="M2160 167.7h3v14.6h-3zM2166 162.8h3v11.3h-3zM2172 159.6h3v6.5h-3zM2196 190.3h3v12.9h-3zM2202 177.4h3v12.9h-3zM2214 190.3h3v8.1h-3zM2220 183.9h3v8.1h-3zM2232 182.2h3v6.5h-3zM2238 119.1h3v55h-3zM2256 127.2h3v19.4h-3zM2262 119.1h3v22.7h-3zM2268 112.7h3v9.7h-3zM2274 115.3h3v1.3h-3zM2280 88.4h3v8.1h-3zM2304 93.3h3v3.2h-3zM2310 88.4h3v8.1h-3zM2316 87.8h3v1.3h-3zM2328 86.8h3v8.1h-3zM2334 88.4h3v4.4h-3zM2340 88.4h3v3.3h-3zM2358 88.4h3v9.7h-3zM2370 111.1h3v27.5h-3zM2412 169.3h3v6.5h-3zM2418 162.8h3v9.7h-3zM2424 127.2h3v24.3h-3zM2430 112.7h3v8.1h-3zM2436 103h3v16.2h-3zM2442 86.8h3v21h-3zM2472 138.6h3v8.1h-3zM2478 132.1h3v8.1h-3zM2496 149.9h3v9.7h-3zM2514 133.7h3v25.9h-3zM2532 137.9h3v1.3h-3zM2538 129.5h3v7.5h-3zM2550 133.7h3v32.4h-3zM2556 127.2h3v8.1h-3zM2562 128.9h3v9.7h-3zM2568 141.8h3v4.9h-3zM2574 138.6h3v4.9h-3zM2580 133.7h3v4.9h-3zM2592 156.2h3v3.7h-3zM2598 136.6h3v19.6h-3zM2604 94.9h3v40.5h-3zM2610 88.4h3v6.5h-3zM2616 81.9h3v8.1h-3zM2622 74.8h3v1.3h-3zM2652 62.5h3v6.5h-3zM2658 56h3v8.1h-3zM2664 57.7h3v4.9h-3zM2670 43.1h3v14.6h-3zM2682 51.2h3v4.9h-3zM2700 54.4h3v8.1h-3zM2706 38.2h3v11.3h-3zM2712 36.6h3v4.6h-3z" fill="#ff0000"/>
<path d="M2179.5 162.2V183.9M2185.5 164.4V204.9M2191.5 182.6V185.2M2209.5 159.6V209.8M2227.5 171.9V187.1M2245.5 119.1V145M2251.5 131.4V134M2287.5 87.1V89.7M2293.5 87.8V92.3M2299.5 87.8V98.8M2323.5 81.9V97.1M2347.5 75.5V96.5M2353.5 94.2V102M2365.5 82.7V92.4M2377.5 113.6V129.5M2383.5 118.7V156.8M2389.5 150.9V179M2395.5 164.4V179M2401.5 170.9V177.4M2407.5 143.4V164.4M2449.5 87.1V89.7M2455.5 109.4V132.7M2461.5 130.5V166.1M2467.5 143.4V159.6M2485.5 131.4V142.4M2491.5 139.5V166.1M2503.5 146V161.2M2509.5 148.3V166.1M2521.5 131.4V145.7M2527.5 112.7V147.3M2545.5 128.9V197.5M2587.5 132.1V184.5M2629.5 34.4V50.2M2635.5 39.2V64.1M2641.5 39.9V69.6M2647.5 61.9V75.5M2677.5 42.4V51.8M2689.5 41.5V69M2695.5 55.4V69" stroke="#0000ff" fill="none"/>
<path d="M2178 162.8h3v14.6h-3zM2184 167.7h3v14.6h-3zM2190 183.2h3v1.3h-3zM2208 172.5h3v25.9h-3zM2226 172.5h3v8.1h-3zM2244 120.8h3v2.3h-3zM2250 132.1h3v1.3h-3zM2286 87.8h3v1.3h-3zM2292 88.4h3v3.2h-3zM2298 88.4h3v9.7h-3zM2322 88.4h3v8.1h-3zM2346 86.8h3v8.1h-3zM2352 94.9h3v6.5h-3zM2364 84.8h3v3.6h-3zM2376 114.3h3v14.6h-3zM2382 120.7h3v31.3h-3zM2388 151.5h3v21h-3zM2394 167.7h3v6.5h-3zM2400 172.5h3v3.2h-3zM2406 148.3h3v12.9h-3zM2448 87.8h3v1.3h-3zM2454 114.3h3v17.8h-3zM2460 138.6h3v8.1h-3zM2466 146.7h3v8.1h-3zM2484 132.1h3v9.7h-3zM2490 140.2h3v19.4h-3zM2502 146.7h3v6.5h-3zM2508 151.5h3v9.7h-3zM2520 132.1h3v12.9h-3zM2526 132.1h3v14.6h-3zM2544 158h3v8.1h-3zM2586 141.8h3v24.3h-3zM2628 35h3v14.6h-3zM2634 39.9h3v17.8h-3zM2640 49.6h3v19.4h-3zM2646 62.5h3v6.5h-3zM2676 43.1h3v8.1h-3zM2688 54.4h3v9.7h-3zM2694 56h3v8.1h-3z" fill="#0000ff"/>
<polyline points="2155.8,136.9 2172.7,136.9 2177.5,151.5 2182.4,170.9 2185.6,177.4 2230.9,179 2237.4,170.9 2243.9,158 2273,157.3 2279.4,146.7 2357.1,146.7 2366.8,140.2 2376.5,130.5 2383,127.2 2509.2,128.2 2515.7,131.1 2538.3,131.1 2544.8,140.2 2596.6,141.8 2603.1,148.3 2616,140.2 2622.5,138.6 2629,117.5 2713.1,117.5" fill="none" stroke="#0000ff" stroke-width="3" stroke-linejoin="round"/>
<polyline points="2155.8,172.5 2161.3,183.9 2172.7,182.2 2180.7,177.4 2192.1,177.4 2198.5,183.9 2232.5,185.5 2239,172.5 2243.9,154.7 2263.3,153.1 2269.7,145 2279.4,130.5 2287.5,128.9 2294,117.5 2308.6,115.9 2315,98.1 2324.8,96.5 2329.6,88.4 2347.4,88.4 2353.9,98.1 2366.8,99.1 2371.7,111.1 2376.5,112.7 2383,127.2 2402.4,128.9 2408.9,130.5 2418.6,140.2 2425.1,146.7 2431.6,138.6 2441.3,130.5 2460.7,130.5 2473.6,124 2489.8,124 2499.5,130.5 2506,145 2538.3,146.7 2546.4,156.4 2573.9,156.4 2580.4,161.2 2598.2,159.6 2603.1,148.3 2609.5,143.4 2616,135.3 2624.1,128.9 2632.2,112.7 2645.1,94.9 2651.6,85.2 2658.1,67.4 2664.6,62.5 2671,56 2713.1,56" fill="none" stroke="#ff0000" stroke-width="3" stroke-linejoin="round"/>
<polyline points="2155.8,94.9 2161.3,83.5 2172.7,94.9 2179.1,88.4 2196.9,88.4 2203.4,99.7 2209.9,88.4 2216.3,88.4 2221.2,106.2 2227.7,122.4 2233.5,154.7 2239,172.5 2245.5,172.5 2256.8,166.1 2263.3,166.1 2269.7,156.4 2274.6,128.9 2281.1,115.9 2292.4,88.4 2298.9,88.4 2304.7,132.1 2310.2,146.7 2316.7,146.7 2329.6,133.7 2334.5,140.2 2341.6,158 2347.4,153.1 2353.9,151.5 2360.4,148.3 2366.8,133.7 2371.7,138.6 2376.5,145 2389.5,128.9 2394.3,162.8 2400.8,141.8 2407.3,128.9 2412.1,133.7 2418.6,141.8 2425.1,148.3 2431.6,135.3 2438,164.4 2443.9,154.7 2449.4,135.3 2455.8,94.9 2473.6,73.8 2479.4,50.5 2486.6,59.3 2493,69 2497.9,69 2509.2,56 2515.7,56 2522.2,44.7 2540,63.5 2545.5,62.5 2557.8,39.9 2560.4,36.6" fill="none" stroke="#008000" stroke-width="3" stroke-linejoin="round"/>
<path d="M2160 308h3v1h-3zM2166 308h3v1h-3zM2172 308h3v1h-3zM2178 307h3v2h-3zM2184 307h3v2h-3zM2196 255h3v54h-3zM2202 279h3v30h-3zM2208 299h3v10h-3zM2214 303h3v6h-3zM2220 308h3v1h-3zM2232 308h3v1h-3zM2238 298h3v11h-3zM2244 278h3v31h-3zM2250 291h3v18h-3zM2256 300h3v9h-3zM2262 304h3v5h-3zM2268 307h3v2h-3zM2274 308h3v1h-3zM2280 304h3v5h-3zM2286 304h3v5h-3zM2292 303h3v6h-3zM2298 308h3v1h-3zM2304 308h3v1h-3zM2310 308h3v1h-3zM2322 308h3v1h-3zM2328 308h3v1h-3zM2334 308h3v1h-3zM2340 308h3v1h-3zM2346 308h3v1h-3zM2352 304h3v5h-3zM2358 306h3v3h-3zM2364 308h3v1h-3zM2370 281h3v28h-3zM2376 284h3v25h-3zM2382 283h3v26h-3zM2388 299h3v10h-3zM2394 307h3v2h-3zM2400 308h3v1h-3zM2406 308h3v1h-3zM2412 304h3v5h-3zM2418 290h3v19h-3zM2424 300h3v9h-3zM2430 303h3v6h-3zM2436 289h3v20h-3zM2442 302h3v7h-3zM2448 308h3v1h-3zM2454 301h3v8h-3zM2460 305h3v4h-3zM2466 305h3v4h-3zM2472 307h3v2h-3zM2478 307h3v2h-3zM2484 308h3v1h-3zM2490 307h3v2h-3zM2496 308h3v1h-3zM2502 308h3v1h-3zM2508 308h3v1h-3zM2514 308h3v1h-3zM2520 307h3v2h-3zM2526 305h3v4h-3zM2532 307h3v2h-3zM2538 308h3v1h-3zM2544 248h3v61h-3zM2550 279h3v30h-3zM2556 282h3v27h-3zM2562 271h3v38h-3zM2568 295h3v14h-3zM2574 308h3v1h-3zM2580 255h3v54h-3zM2586 278h3v31h-3zM2592 299h3v10h-3zM2598 266h3v43h-3zM2604 253h3v56h-3zM2610 264h3v45h-3zM2616 267h3v42h-3zM2622 305h3v4h-3zM2628 284h3v25h-3zM2634 297h3v12h-3zM2640 296h3v13h-3zM2646 300h3v9h-3zM2652 298h3v11h-3zM2658 303h3v6h-3zM2664 307h3v2h-3zM2670 306h3v3h-3zM2676 307h3v2h-3zM2682 306h3v3h-3zM2688 294h3v15h-3zM2694 301h3v8h-3zM2700 297h3v12h-3zM2706 299h3v10h-3zM2712 307h3v2h-3z" fill="#008000"/>
<path d="M2155 366.5H2717" stroke="#808080" fill="none"/>
<polyline points="2155,342.5 2200,356.2 2250,370 2300,377.5 2362.5,386.2 2412.5,395 2475,400.5 2525,400 2575,397 2625,390 2675,383.8 2712.5,380" fill="none" stroke="#ffc0cb" stroke-width="1" stroke-linejoin="round"/>
<path d="M2161.5 359.1V367M2167.5 358.4V367M2173.5 357.7V367M2179.5 358.2V367M2185.5 359.2V367M2191.5 360.3V367M2197.5 361V367M2203.5 361.1V367M2209.5 361.2V367M2215.5 361.2V367M2221.5 361.3V367M2227.5 361.4V367M2233.5 361.9V367M2239.5 359.2V367M2245.5 357.6V367M2251.5 357.1V367M2257.5 356.4V367M2263.5 356.4V367M2269.5 356.5V367M2275.5 357V367M2281.5 356.3V367M2287.5 355.5V367M2293.5 356.1V367M2299.5 357.9V367M2305.5 358.4V367M2311.5 358.8V367M2317.5 360.1V367M2323.5 361.3V367M2329.5 362.5V367M2335.5 364.1V367M2371.5 366V370.2M2377.5 366V372.9M2383.5 366V374.3M2389.5 366V376.6M2395.5 366V378.7M2401.5 366V379.5M2407.5 366V379.5M2413.5 366V378M2419.5 366V376.8M2425.5 366V372.4M2431.5 366V369.7M2443.5 362.6V367M2449.5 360.4V367M2455.5 362.5V367M2461.5 364.3V367M2479.5 366V368.5M2485.5 366V368.9M2491.5 366V369.4M2497.5 366V369.8M2503.5 366V369.7M2509.5 366V369.2M2515.5 366V368.4M2539.5 364.7V367M2575.5 364.5V367M2581.5 364.6V367M2587.5 364.6V367M2593.5 364.7V367M2599.5 364.7V367M2605.5 363V367M2611.5 360.8V367M2617.5 358.7V367M2623.5 357.3V367M2629.5 355.9V367M2635.5 355.7V367M2641.5 357V367M2647.5 357.3V367M2653.5 358V367M2659.5 358.9V367M2665.5 359.7V367M2671.5 360.3V367M2677.5 361.4V367M2683.5 363V367M2689.5 364.1V367" stroke="#ff0000" fill="none"/>
<path d="M2341 366h1v1h-1zM2347 366h1v1h-1zM2353 366h1v1h-1zM2359 366h1v1h-1zM2365 366h1v1h-1zM2437 366h1v1h-1zM2467 366h1v1h-1zM2473 366h1v1h-1zM2521 366h1v1h-1zM2527 366h1v1h-1zM2533 366h1v1h-1zM2545 366h1v1h-1zM2551 366h1v1h-1zM2557 366h1v1h-1zM2563 366h1v1h-1zM2569 366h1v1h-1zM2695 366h1v1h-1zM2701 366h1v1h-1zM2707 366h1v1h-1zM2713 366h1v1h-1z" fill="#ff0000"/>
<polyline points="2155,396.2 2175,387.5 2200,383.8 2232.5,378.8 2242.5,370 2257.5,362.5 2275,356.2 2290,347.5 2310,344.5 2330,345 2350,347 2367.5,350 2382.5,360 2397.5,372.5 2407.5,377.5 2418.8,378.8 2432.5,372.5 2450,362.5 2462.5,366.2 2475,368.8 2500,372.5 2512.5,372.5 2537.5,369.5 2550,370.5 2575,368 2600,367.5 2617.5,357.5 2632.5,347.5 2650,343.8 2675,340.8 2687.5,342.5 2700,345" fill="none" stroke="#ffff00" stroke-width="1" stroke-linejoin="round"/>
<polyline points="2155,402.5 2195,389.5 2230,383.8 2250,375 2270,367.5 2300,353.8 2320,350 2337.5,347 2355,347.5 2375,349.5 2390,356.2 2410,366.2 2425,370.5 2440,370.5 2455,367.5 2475,367.5 2500,369.5 2520,371.2 2550,370.8 2575,369.5 2600,368.8 2617.5,365 2640,355 2662.5,348.8 2680,345 2712.5,344" fill="none" stroke="#0000ff" stroke-width="1" stroke-linejoin="round"/>
<path d="M2155 447.5H2712" stroke="#0000ff" fill="none"/>
<path d="M2155 487.5H2712" stroke="#ff0000" fill="none"/>
<polyline points="2155,473.8 2173.8,462 2181.2,463.8 2192.5,472 2200,473 2217.5,471.2 2232.5,464.5 2242.5,456.2 2252.5,450.5 2262.5,452 2272.5,449.5 2282.5,444.5 2297.5,441.8 2312.5,442.5 2327.5,443.8 2342.5,444.2 2352.5,451.2 2365,456.2 2372.5,458.8 2382.5,470 2392.5,481.2 2402.5,490.5 2412.5,493 2422.5,489.5 2432.5,475 2442.5,460 2450,451.2 2455,450.5 2462.5,460 2472.5,470.8 2485,472 2495,478.8 2507.5,486.2 2518.8,483.8 2530,480 2542.5,470 2552.5,462.5 2562.5,455.5 2575,455 2583.8,455 2592.5,457.5 2597.5,458.8 2607.5,448 2617.5,440 2625,437.5 2635,438.8 2645,445 2657.5,445.8 2672.5,443.8 2682.5,445 2692.5,453.8 2700,458 2707.5,456.2 2712.5,452.5" fill="none" stroke="#ff0000" stroke-width="1" stroke-linejoin="round"/>
<polyline points="2155,475 2161.2,465 2172.5,460.5 2178.8,465 2185,473 2197.5,473.8 2203.8,467.5 2210,473 2216.2,472.5 2225,464.5 2233.8,462.5 2240,452 2251.2,448 2257.5,455 2265,450 2272.5,448 2280,443.8 2287.5,441.8 2297.5,441.8 2305,444.2 2312.5,441.8 2322.5,444.5 2332.5,444.2 2345,445 2352.5,458.8 2362.5,455 2370,460 2377.5,471.2 2382.5,476.2 2390,487 2401.2,493.8 2410,492.5 2418.8,490.8 2430,470 2437.5,460 2448.8,444.5 2455,457.5 2461.2,467.5 2467.5,472 2473.8,472.5 2481.2,471.2 2490,478.8 2500,483.8 2508,487.5 2515,480.8 2521.2,480 2527.5,481.2 2538.8,466.2 2545,470 2556.2,452 2563.8,455.5 2572.5,454.5 2580,451.2 2587,461.2 2593.8,458.8 2600,452.5 2605,443 2615,439.5 2622.5,436.2 2632.5,441.2 2641.2,446.2 2650,446.8 2662.5,445 2670,442.5 2680,444.2 2687.5,453.8 2695,461.2 2702.5,458.8 2708.8,450 2712.5,448" fill="none" stroke="#0000ff" stroke-width="1" stroke-linejoin="round"/>
<path d="M3042.5 54.3V135.2M3048.5 61.4V131.1M3054.5 62.8V127.1M3060.5 63.3V127.9M3066.5 66.7V128.6M3072.5 69V133.2M3078.5 69.8V137M3084.5 87.2V137.6M3090.5 97.3V138.2M3096.5 98.6V138.8M3102.5 98.6V139.4M3108.5 98.6V140M3114.5 98.6V140M3120.5 98.6V140M3126.5 98.6V140M3132.5 98.6V140M3138.5 98.6V140M3144.5 98.6V139.5M3150.5 98.6V138.5M3156.5 98.6V137.5M3162.5 98.6V137.7M3168.5 98.6V141M3174.5 98.6V143.9M3180.5 98.6V143.9M3186.5 98.6V143.9M3192.5 108.4V143.9M3198.5 118.5V143.9M3204.5 124.6V143.9" stroke="#0000ff" fill="none"/>
<polyline points="3042.3,135.2 3053.6,127.1 3066.6,128.7 3076.3,136.8 3108.6,140 3141,140 3160.4,136.8 3173.3,143.9 3208.9,143.9" fill="none" stroke="#00ffff" stroke-width="1" stroke-linejoin="round"/>
<polyline points="3042.3,54.3 3048.8,62.4 3060.1,63.3 3069.8,68.8 3077.9,69.5 3084.4,88.3 3090.8,98.6 3187.9,98.6 3194.4,114.1 3202.5,123.9 3208.9,127.1" fill="none" stroke="#ff0000" stroke-width="1" stroke-linejoin="round"/>
<polyline points="3037.4,86.6 3060.1,94.7 3092.4,107.7 3124.8,115.8 3157.2,123.9 3183.1,127.1 3204.1,122.2" fill="none" stroke="#800080" stroke-width="1" stroke-linejoin="round"/>
<polyline points="2827.1,30 2849.7,52.7 2869.1,68.8 2891.8,81.8 2914.4,96.3 2933.9,110.9 2956.5,122.2 2979.2,128.7 3005.1,133.6 3031,140 3060.1,141.7 3092.4,140 3141,141.7 3173.3,133.6 3204.1,125.5" fill="none" stroke="#00ffff" stroke-width="1" stroke-linejoin="round"/>
<polyline points="2792.1,39.7 2804.4,43.6 2823.8,52.7 2849.7,78.5 2875.6,104.4 2891.8,119 2914.4,140 2927.4,151.4 2940.3,157.8 2966.2,159.4 2992.1,154.6 3011.5,149.7 3043.9,143.3 3076.3,135.2 3108.6,133.6 3134.5,138.4 3157.2,133.6 3179.8,123.9 3204.1,110.9" fill="none" stroke="#006400" stroke-width="1" stroke-linejoin="round"/>
<polyline points="2792.1,42.9 2810.9,49.4 2827.1,62.4 2849.7,89.9 2875.6,115.8 2891.8,127.1 2914.4,153 2933.9,164.3 2953.3,162.7 2979.2,153 3011.5,140 3037.4,135.2 3063.3,127.1 3092.4,131.9 3124.8,141.7 3147.5,140 3173.3,127.1 3204.1,117.4" fill="none" stroke="#ff6600" stroke-width="1" stroke-linejoin="round"/>
<polyline points="2796,67.4 2802,66.8 2808,72.1 2814,76.2 2820,80.8 2826,88.1 2832,97.1 2838,105.6 2844,114.3 2850,122.9 2856,134 2862,146.5 2868,151.8 2874,159.4 2880,166.1 2886,169.8 2892,171.9 2898,173.3 2904,174 2910,176.4 2916,175.4 2922,175.8 2928,175.5 2934,175.1 2940,170.6 2946,167.3 2952,162.5 2958,159.2 2964,155.9 2970,149.5 2976,143.9 2982,135.7 2988,130.1 2994,123.3 3000,120.7 3006,117.6 3012,115.6 3018,115.7 3024,119.7 3030,125.4 3036,130.2 3042,133.7 3048,134.7 3054,134.7 3060,134.9 3066,138.8 3072,142.4 3078,143.8 3084,142.3 3090,140.9 3096,140 3102,141.1 3108,143.6 3114,147.1 3120,150.1 3126,150.1 3132,151.5 3138,150.7 3144,146.8 3150,142.2 3156,137.4 3162,131.2 3168,125.9 3174,120.4 3180,114.1 3186,107.9 3192,101.1 3198,94.9 3204,90.9" fill="none" stroke="#00ff00" stroke-width="1" stroke-linejoin="round"/>
<polyline points="2796,67.5 2802,66.3 2808,77 2814,85.2 2820,94.4 2826,108.6 2832,128 2838,134.2 2844,143.4 2850,151.3 2856,159.3 2862,165.1 2868,169.4 2874,175.4 2880,180.9 2886,180.2 2892,178.6 2898,177.2 2904,172.7 2910,171.8 2916,170.6 2922,173 2928,173.8 2934,177.5 2940,169.4 2946,164 2952,152 2958,144.5 2964,134.4 2970,129.6 2976,123.9 2982,119.4 2988,115.6 2994,112.1 3000,111.8 3006,111.2 3012,111.7 3018,115.7 3024,127.3 3030,138.9 3036,149.2 3042,155.7 3048,153.7 3054,142.1 3060,130.9 3066,128.3 3072,129 3078,133.9 3084,142.6 3090,150.8 3096,151.6 3102,153.1 3108,153.4 3114,151.6 3120,149.4 3126,148.6 3132,149.8 3138,147.9 3144,142.1 3150,135 3156,126.1 3162,112.5 3168,104 3174,98.6 3180,93.2 3186,89.6 3192,89.7 3198,85.8 3204,83.2" fill="none" stroke="#ff0000" stroke-width="1" stroke-linejoin="round"/>
<path d="M2796.5 66.6V76.9M2802.5 53.6V67.9M2814.5 93.1V127.7M2838.5 147.5V164.3M2862.5 177.6V191.8M2868.5 171.1V173.7M2880.5 172.4V191.8M2892.5 177.2V191.8M2898.5 163.7V187M2904.5 154.6V172.4M2916.5 159.6V180.6M2922.5 161.1V200.6M2934.5 172.4V187M2940.5 123.9V178.9M2952.5 129.7V151.4M2958.5 125.5V137.4M2970.5 102.8V120.6M2982.5 107V119.6M2994.5 102.8V120.6M3000.5 102.8V115.8M3006.5 102.8V118M3018.5 130.3V148.8M3042.5 135.2V169.8M3048.5 117.4V134.2M3054.5 104.4V124.5M3072.5 139.4V153M3096.5 149.1V160.1M3108.5 140V149.7M3114.5 141V187M3138.5 142.6V162.7M3144.5 102.8V142.3M3150.5 101.2V117.4M3156.5 101.5V104.1M3174.5 87.6V98.6M3180.5 79.5V90.5M3198.5 70.5V90.5" stroke="#ff0000" fill="none"/>
<path d="M2795 67.2h3v4.9h-3zM2801 54.3h3v12.9h-3zM2813 107.7h3v19.4h-3zM2837 148.1h3v11.3h-3zM2861 178.2h3v8.7h-3zM2867 171.7h3v1.3h-3zM2879 178.9h3v8.1h-3zM2891 180.5h3v1.6h-3zM2897 164.3h3v14.6h-3zM2903 159.4h3v9.7h-3zM2915 169.7h3v6.9h-3zM2921 172.4h3v19.4h-3zM2933 177.2h3v3.2h-3zM2939 133.6h3v42.1h-3zM2951 130.3h3v11.3h-3zM2957 130.3h3v6.5h-3zM2969 110.9h3v6.5h-3zM2981 107.7h3v11.3h-3zM2993 110.9h3v6.5h-3zM2999 107.7h3v4.9h-3zM3005 110.9h3v6.5h-3zM3017 135.2h3v12.9h-3zM3041 136.8h3v32.4h-3zM3047 123.9h3v9.7h-3zM3053 110.9h3v12.9h-3zM3071 140h3v11.3h-3zM3095 149.7h3v9.7h-3zM3107 143.3h3v3.2h-3zM3113 141.7h3v16.2h-3zM3137 143.3h3v16.2h-3zM3143 110.9h3v30.7h-3zM3149 106.1h3v4.9h-3zM3155 102.2h3v1.3h-3zM3173 88.3h3v9.7h-3zM3179 80.2h3v9.7h-3zM3197 76.3h3v13.6h-3z" fill="#ff0000"/>
<path d="M2808.5 66.6V138.4M2820.5 94.8V121.2M2826.5 78.5V156.2M2832.5 138.4V178.9M2844.5 141.7V164.3M2850.5 138.4V156.2M2856.5 149.7V209.6M2874.5 141.7V191.8M2886.5 169.2V182.1M2910.5 154.6V191.2M2928.5 161.1V195M2946.5 115.8V151.4M2964.5 127.4V130M2976.5 107.7V120.6M2988.5 107.7V118M3012.5 109.6V112.2M3024.5 136.1V173.4M3030.5 164.3V174M3036.5 154.6V172.4M3060.5 109.6V112.2M3066.5 123.9V164.3M3078.5 138.4V153M3084.5 143.3V164.3M3090.5 154.6V164.3M3102.5 141V148.8M3120.5 141V156.2M3126.5 142.6V152M3132.5 140V191.8M3162.5 69.8V93.1M3168.5 75.3V100.2M3186.5 79.5V90.5M3192.5 76.9V93.8M3204.5 75.6V78.2" stroke="#0000ff" fill="none"/>
<path d="M2807 67.2h3v58.3h-3zM2819 108h3v5.5h-3zM2825 106.1h3v35.6h-3zM2831 141.7h3v17.8h-3zM2843 146.5h3v8.1h-3zM2849 143.3h3v8.1h-3zM2855 151.4h3v30.7h-3zM2873 159.4h3v25.9h-3zM2885 172.4h3v6.5h-3zM2909 159.4h3v19.4h-3zM2927 169.2h3v12.9h-3zM2945 127.1h3v12.9h-3zM2963 128.1h3v1.3h-3zM2975 110.9h3v6.5h-3zM2987 110.9h3v6.5h-3zM3011 110.3h3v1.3h-3zM3023 136.8h3v32.4h-3zM3029 167.5h3v3.2h-3zM3035 159.4h3v8.1h-3zM3059 110.3h3v1.3h-3zM3065 128.7h3v24.3h-3zM3077 141.7h3v6.5h-3zM3083 146.5h3v9.7h-3zM3089 157.8h3v3.2h-3zM3101 141.7h3v6.5h-3zM3119 141.7h3v9.7h-3zM3125 143.3h3v8.1h-3zM3131 144.9h3v17.8h-3zM3161 70.5h3v19.4h-3zM3167 85h3v14.6h-3zM3185 80.2h3v9.7h-3zM3191 86.6h3v6.5h-3zM3203 76.3h3v1.3h-3z" fill="#0000ff"/>
<polyline points="2891.8,122.2 2898.3,122.9 2906.4,131 2953.3,131 2959.8,140 2966.2,144.9 2975.9,144.9 2984,154.6 3008.3,154.6 3013.2,151.4 3076.3,151.4 3086,143.3 3092.4,139.4 3105.4,139.4 3113.5,143.3 3137.8,143.9 3144.2,147.2 3157.2,146.5 3162,131.9 3204.1,131" fill="none" stroke="#0000ff" stroke-width="3" stroke-linejoin="round"/>
<polyline points="2885.3,172.4 2895,174 2904.7,172.4 2911.2,167.5 2920.9,170.8 2927.4,178.9 2934.5,180.5 2940.3,159.4 2946.8,154.6 2958.1,143.3 2972.7,143.3 2985.6,140 2995.4,131.9 3000.2,127.1 3008.3,117.4 3013.2,118 3018,125.5 3024.5,138.4 3043.9,136.8 3053.6,136.8 3063.3,140 3079.5,140 3087.6,141.7 3095.7,135.2 3105.4,136.8 3111.9,141.7 3115.1,157.8 3137.8,159.4 3144.2,144.9 3150.7,141.7 3160.4,135.2 3168.5,128.7 3181.4,128.7 3189.5,117.4 3197.6,102.8 3200.9,88.3" fill="none" stroke="#ff0000" stroke-width="3" stroke-linejoin="round"/>
<polyline points="2792.1,133.6 2807.7,133.6 2814.1,128.7 2820.6,110.9 2826.4,114.1 2832.9,107.7 2838.4,114.8 2844.9,110.9 2862.7,110.9 2868.5,136.8 2874,169.2 2880.5,169.2 2886.9,161.1 2892.4,141.7 2898.3,123.9 2904.1,110.9 2909.6,110.9 2916.1,149.7 2922.5,146.5 2927.4,148.1 2933.9,154.6 2940.3,154.6 2946.8,153 2952.6,154.6 2964.6,144.9 2971.1,143.3 2977.6,151.4 2983.1,162.7 2988.9,136.8 2995.4,110.9 3006.7,104.4 3013.2,89.9 3018,98 3030.3,80.8 3042.3,93.1 3048.8,76.9 3054.3,76.3" fill="none" stroke="#008000" stroke-width="3" stroke-linejoin="round"/>
<path d="M2807 295h3v6h-3zM2813 299h3v2h-3zM2825 284h3v17h-3zM2831 290h3v11h-3zM2837 300h3v1h-3zM2843 295h3v6h-3zM2849 298h3v3h-3zM2855 292h3v9h-3zM2861 300h3v1h-3zM2873 297h3v4h-3zM2879 300h3v1h-3zM2891 300h3v1h-3zM2897 300h3v1h-3zM2903 300h3v1h-3zM2909 299h3v2h-3zM2921 250h3v51h-3zM2927 292h3v9h-3zM2939 294h3v7h-3zM2945 272h3v29h-3zM2951 293h3v8h-3zM2957 300h3v1h-3zM2969 295h3v6h-3zM2975 297h3v4h-3zM2981 300h3v1h-3zM2993 300h3v1h-3zM3005 297h3v4h-3zM3017 270h3v31h-3zM3023 279h3v22h-3zM3029 300h3v1h-3zM3035 298h3v3h-3zM3041 284h3v17h-3zM3047 285h3v16h-3zM3053 297h3v4h-3zM3065 294h3v7h-3zM3071 298h3v3h-3zM3077 300h3v1h-3zM3083 299h3v2h-3zM3089 300h3v1h-3zM3095 299h3v2h-3zM3101 298h3v3h-3zM3113 246h3v55h-3zM3119 262h3v39h-3zM3125 292h3v9h-3zM3131 250h3v51h-3zM3137 269h3v32h-3zM3143 240h3v61h-3zM3149 276h3v25h-3zM3155 299h3v2h-3zM3161 279h3v22h-3zM3167 288h3v13h-3zM3173 291h3v10h-3zM3179 298h3v3h-3zM3185 299h3v2h-3zM3191 287h3v14h-3zM3197 288h3v13h-3zM3203 300h3v1h-3z" fill="#008000"/>
<path d="M2792 350.5H3209" stroke="#808080" fill="none"/>
<polyline points="3030,336.2 3047.5,346.2 3072.5,360 3097.5,368.8 3135,382.5 3160,388.8 3185,393 3203.8,394.5" fill="none" stroke="#ffc0cb" stroke-width="1" stroke-linejoin="round"/>
<path d="M2796 350h1v1h-1zM2802 350h1v1h-1zM2892 350h1v1h-1zM2898 350h1v1h-1zM3024 350h1v1h-1zM3048 350h1v1h-1zM3066 350h1v1h-1zM3072 350h1v1h-1zM3078 350h1v1h-1zM3102 350h1v1h-1zM3108 350h1v1h-1zM3114 350h1v1h-1zM3120 350h1v1h-1zM3126 350h1v1h-1zM3132 350h1v1h-1zM3138 350h1v1h-1z" fill="#ff0000"/>
<path d="M2808.5 350V352.3M2814.5 350V354.4M2820.5 350V352.2M2826.5 350V355.2M2832.5 350V357.4M2838.5 350V357.9M2844.5 350V358.5M2850.5 350V358.9M2856.5 350V359M2862.5 350V358.7M2868.5 350V357.5M2874.5 350V356.2M2880.5 350V354.8M2886.5 350V352.9M2904.5 347.5V351M2910.5 347.3V351M2916.5 347.2V351M2922.5 347.1V351M2928.5 347V351M2934.5 345.4V351M2940.5 343V351M2946.5 340.6V351M2952.5 339.5V351M2958.5 338.8V351M2964.5 338.1V351M2970.5 337.9V351M2976.5 338.7V351M2982.5 339.6V351M2988.5 340.2V351M2994.5 340.8V351M3000.5 341.2V351M3006.5 343.1V351M3012.5 343.7V351M3018.5 346.9V351M3030.5 350V352.7M3036.5 350V354.5M3042.5 350V353M3054.5 348.5V351M3060.5 347.3V351M3084.5 350V352.6M3090.5 350V353M3096.5 350V352.4M3144.5 347.9V351M3150.5 346.2V351M3156.5 344.8V351M3162.5 343.6V351M3168.5 343.3V351M3174.5 342.9V351M3180.5 343.7V351M3186.5 344.3V351M3192.5 344.7V351M3198.5 344.6V351M3204.5 344.5V351" stroke="#ff0000" fill="none"/>
<polyline points="2792.5,365 2803.8,365 2815,371.2 2820,370 2830,377.5 2847.5,383.8 2860,387.5 2877.5,388.8 2892.5,385 2905,380.5 2930,377 2947.5,365 2970,353.8 2985,348.8 3000,344.5 3012.5,343.8 3022.5,348.8 3036.2,355 3047.5,353 3058.8,348.8 3072.5,352 3090,354.5 3110,353.8 3135,355 3145,351.2 3160,343.8 3175,338.8 3190,337 3203.8,333.8" fill="none" stroke="#ffff00" stroke-width="1" stroke-linejoin="round"/>
<polyline points="2792.5,364.5 2810,366.2 2830,371.2 2855,378 2877.5,384.2 2892.5,385 2910,382.5 2930,380 2947.5,375 2965,368.2 2985,358.8 3007.5,350.5 3022.5,349.2 3040,352 3055,352 3072.5,351.2 3097.5,353 3122.5,353.8 3145,353.8 3160,350 3180,344.5 3203.8,339.2" fill="none" stroke="#0000ff" stroke-width="1" stroke-linejoin="round"/>
<path d="M2792 437.5H3205" stroke="#0000ff" fill="none"/>
<path d="M2792 481.5H3205" stroke="#ff0000" fill="none"/>
<polyline points="2792.5,483 2810,482 2820,477.5 2828.8,477 2840,480.5 2857.5,482.5 2885,482 2895,480 2903.8,476.2 2912.5,470 2922.5,465 2933.8,462.5 2942.5,453.8 2952.5,442.5 2965,436.2 2977.5,432.5 2990,430 3011.2,429.5 3017.5,433.8 3025,452.5 3035,475 3041.2,478 3050,467.5 3060,447 3066.2,446.2 3072.5,453.8 3080,462.5 3090,470 3097.5,471.8 3107.5,467.5 3117.5,462.5 3127.5,461.2 3135,463 3145,455 3155,435 3162.5,430.5 3172.5,433 3185,432 3195,432.5 3203.8,430" fill="none" stroke="#ff0000" stroke-width="1" stroke-linejoin="round"/>
<polyline points="2792.5,485 2796.2,483.8 2802.5,478 2808.8,483.8 2814.5,480.5 2820,471.2 2826.2,478.8 2832.5,483 2838.8,480 2845,482 2856.2,483 2867.5,481.2 2875,483 2887.5,481.2 2892.5,479.5 2898.8,475 2912.5,467.5 2922.5,462 2928.8,465 2933.8,461.2 2940,446.2 2947.5,442 2957.5,438.8 2970,432.5 2976.2,432.5 2982.5,429.2 2992.5,430 3011.2,429.2 3017.5,440 3023.8,467.5 3031.2,480 3036.2,482.5 3047.5,460 3060,438 3066.2,455 3072.5,461.2 3077.5,463.8 3083.8,470 3090,473.8 3096.2,470 3107.5,465 3113.8,460 3120,462.5 3126.2,460.5 3132.5,467 3137.5,460 3145,440 3156.2,428 3162.5,431.2 3168.8,434.2 3175,433.8 3180,430.5 3191.2,433.8 3197.5,428.8 3203.8,427" fill="none" stroke="#0000ff" stroke-width="1" stroke-linejoin="round"/>
</svg>
</div></body></html>
